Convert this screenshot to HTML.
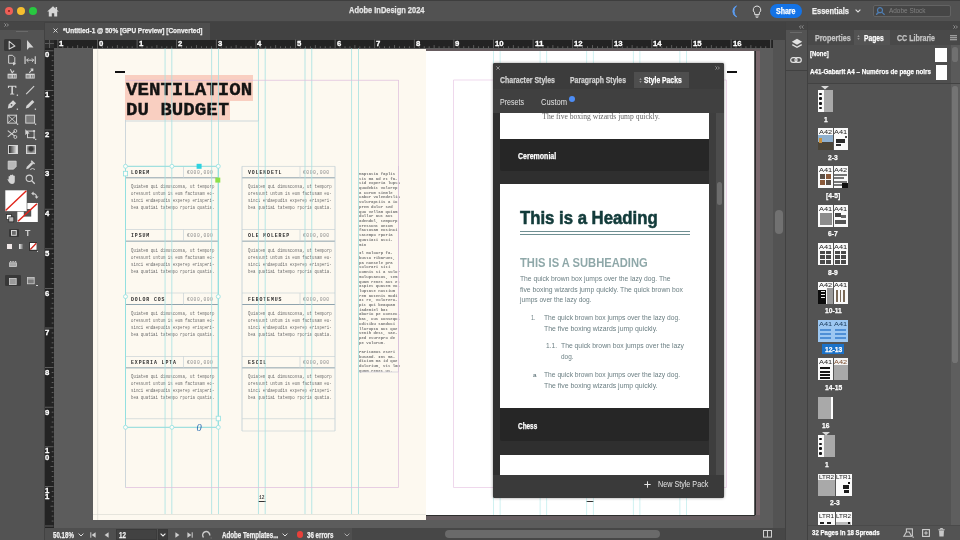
<!DOCTYPE html>
<html lang="en"><head><meta charset="utf-8"><title>Adobe InDesign 2024</title>
<style>
*{box-sizing:border-box;margin:0;padding:0}
html,body{width:960px;height:540px;overflow:hidden;background:#535353}
body{position:relative;font-family:"Liberation Sans",sans-serif}
div{position:absolute}
svg{position:absolute;overflow:visible}
#app{left:0;top:0;width:960px;height:540px;overflow:hidden;will-change:transform}
.t{white-space:pre}
.fs{font-family:"Liberation Sans",sans-serif}
.fm{font-family:"Liberation Mono",monospace}
.fr{font-family:"Liberation Serif",serif}
.b{font-weight:bold}
</style></head>
<body>
<div id="app">
<div style="left:0px;top:0px;width:960px;height:22px;background:#525252;"></div>
<div style="left:0px;top:0px;width:960px;height:0.8px;background:#3e3e3e;"></div>
<div style="left:0px;top:21px;width:960px;height:1px;background:#444444;"></div>
<div style="left:5px;top:6.7px;width:8px;height:8px;background:#ee5f57;border-radius:50%"></div>
<div style="left:17px;top:6.7px;width:8px;height:8px;background:#f6be2f;border-radius:50%"></div>
<div style="left:29px;top:6.7px;width:8px;height:8px;background:#28c840;border-radius:50%"></div>
<div style="left:7.8px;top:9.5px;width:2.4px;height:2.4px;background:#8c1d16;border-radius:50%"></div>
<svg style="left:47px;top:5.6px;" width="12" height="11" viewBox="0 0 12 11"><path d="M6 0.3 L0.2 5.6 H1.8 V10.6 H4.8 V7.2 H7.2 V10.6 H10.2 V5.6 H11.8 Z" fill="#d6d6d6"/><rect x="8.6" y="1" width="1.5" height="3" fill="#d6d6d6"/></svg>
<div class="t fs b" style="left:349px;top:4px;font-size:8.6px;line-height:12px;color:#e6e6e6;transform:scaleX(0.8680);transform-origin:0 50%;-webkit-text-stroke:0.25px #e6e6e6;">Adobe InDesign 2024</div>
<svg style="left:730px;top:5px;" width="9" height="13" viewBox="0 0 9 13"><path d="M6.5 0.8 A6 6 0 0 0 6.8 12 A7.5 7.5 0 0 1 6.5 0.8 Z" fill="#5b9cf0" stroke="#5b9cf0" stroke-width="0.8"/></svg>
<svg style="left:752px;top:5px;" width="10" height="13" viewBox="0 0 10 13"><path d="M5 1 A3.8 3.8 0 0 1 7.3 7.8 V9.6 H2.7 V7.8 A3.8 3.8 0 0 1 5 1 Z" fill="none" stroke="#e0e0e0" stroke-width="1"/><path d="M3.3 11 H6.7 M3.8 12.3 H6.2" stroke="#e0e0e0" stroke-width="0.9"/></svg>
<div style="left:770px;top:3.5px;width:31.5px;height:14.5px;background:#1473e6;border-radius:7.5px"></div>
<div class="t fs b" style="left:776px;top:5px;font-size:8.6px;line-height:12px;color:#ffffff;transform:scaleX(0.8158);transform-origin:0 50%;-webkit-text-stroke:0.25px #ffffff;">Share</div>
<div class="t fs b" style="left:812px;top:5px;font-size:8.8px;line-height:12px;color:#f0f0f0;transform:scaleX(0.8499);transform-origin:0 50%;-webkit-text-stroke:0.25px #f0f0f0;">Essentials</div>
<svg style="left:855px;top:9px;" width="6" height="4" viewBox="0 0 6 4"><path d="M0.6 0.6 L3 3 L5.4 0.6" fill="none" stroke="#e0e0e0" stroke-width="1.1"/></svg>
<div style="left:872.5px;top:5px;width:78px;height:11.5px;background:#464646;border:1px solid #636363;border-radius:2px"></div>
<svg style="left:875.5px;top:6.5px;" width="10" height="9" viewBox="0 0 10 9"><circle cx="4" cy="3.2" r="2.5" fill="none" stroke="#4f7fb5" stroke-width="1.2"/><path d="M0.6 8 Q0.8 5.6 3 5.6 M6 5.4 L8.6 7.8" fill="none" stroke="#4f7fb5" stroke-width="1.2"/></svg>
<div class="t fs" style="left:889px;top:5px;font-size:7.8px;line-height:11px;color:#808080;transform:scaleX(0.8252);transform-origin:0 50%;">Adobe Stock</div>
<div style="left:45px;top:22px;width:740px;height:518px;background:#5c5c5c;"></div>
<div style="left:45px;top:21.5px;width:740px;height:18px;background:#424242;"></div>
<div style="left:45px;top:23px;width:165px;height:16.5px;background:#4e4e4e;"></div>
<svg style="left:52.5px;top:28px;" width="5" height="5" viewBox="0 0 5 5"><path d="M0.5 0.5 L4.5 4.5 M4.5 0.5 L0.5 4.5" stroke="#e0e0e0" stroke-width="0.9"/></svg>
<div class="t fs b" style="left:63px;top:25px;font-size:8px;line-height:11px;color:#f0f0f0;transform:scaleX(0.8076);transform-origin:0 50%;-webkit-text-stroke:0.25px #f0f0f0;">*Untitled-1 @ 50% [GPU Preview] [Converted]</div>
<div style="left:45px;top:39.5px;width:728.5px;height:8.6px;background:#232323;"></div>
<div style="left:45px;top:39.5px;width:8.5px;height:488.5px;background:#232323;"></div>
<div style="left:45px;top:39.5px;width:8.5px;height:8.6px;background:#2c2c2c;"></div>
<div style="left:48.6px;top:39.5px;width:0.7px;height:8.6px;background:#5a5a5a;"></div>
<div style="left:45px;top:43.4px;width:8.5px;height:0.7px;background:#5a5a5a;"></div>
<svg style="left:0px;top:0px;" width="960" height="540" viewBox="0 0 960 540"><rect x="57.50" y="39.5" width="0.8" height="8.6" fill="#6c6c6c"/><rect x="62.45" y="46.300000000000004" width="0.8" height="1.8" fill="#6c6c6c"/><rect x="67.40" y="46.300000000000004" width="0.8" height="1.8" fill="#6c6c6c"/><rect x="72.35" y="46.300000000000004" width="0.8" height="1.8" fill="#6c6c6c"/><rect x="77.30" y="45.1" width="0.8" height="3" fill="#6c6c6c"/><rect x="82.25" y="46.300000000000004" width="0.8" height="1.8" fill="#6c6c6c"/><rect x="87.20" y="46.300000000000004" width="0.8" height="1.8" fill="#6c6c6c"/><rect x="92.15" y="46.300000000000004" width="0.8" height="1.8" fill="#6c6c6c"/><rect x="97.10" y="39.5" width="0.8" height="8.6" fill="#6c6c6c"/><rect x="102.05" y="46.300000000000004" width="0.8" height="1.8" fill="#6c6c6c"/><rect x="107.00" y="46.300000000000004" width="0.8" height="1.8" fill="#6c6c6c"/><rect x="111.95" y="46.300000000000004" width="0.8" height="1.8" fill="#6c6c6c"/><rect x="116.90" y="45.1" width="0.8" height="3" fill="#6c6c6c"/><rect x="121.85" y="46.300000000000004" width="0.8" height="1.8" fill="#6c6c6c"/><rect x="126.80" y="46.300000000000004" width="0.8" height="1.8" fill="#6c6c6c"/><rect x="131.75" y="46.300000000000004" width="0.8" height="1.8" fill="#6c6c6c"/><rect x="45.0" y="50.40" width="8.5" height="0.8" fill="#6c6c6c"/><rect x="51.7" y="55.35" width="1.8" height="0.8" fill="#6c6c6c"/><rect x="51.7" y="60.30" width="1.8" height="0.8" fill="#6c6c6c"/><rect x="51.7" y="65.25" width="1.8" height="0.8" fill="#6c6c6c"/><rect x="50.5" y="70.20" width="3" height="0.8" fill="#6c6c6c"/><rect x="51.7" y="75.15" width="1.8" height="0.8" fill="#6c6c6c"/><rect x="51.7" y="80.10" width="1.8" height="0.8" fill="#6c6c6c"/><rect x="51.7" y="85.05" width="1.8" height="0.8" fill="#6c6c6c"/><rect x="136.70" y="39.5" width="0.8" height="8.6" fill="#6c6c6c"/><rect x="141.65" y="46.300000000000004" width="0.8" height="1.8" fill="#6c6c6c"/><rect x="146.60" y="46.300000000000004" width="0.8" height="1.8" fill="#6c6c6c"/><rect x="151.55" y="46.300000000000004" width="0.8" height="1.8" fill="#6c6c6c"/><rect x="156.50" y="45.1" width="0.8" height="3" fill="#6c6c6c"/><rect x="161.45" y="46.300000000000004" width="0.8" height="1.8" fill="#6c6c6c"/><rect x="166.40" y="46.300000000000004" width="0.8" height="1.8" fill="#6c6c6c"/><rect x="171.35" y="46.300000000000004" width="0.8" height="1.8" fill="#6c6c6c"/><rect x="45.0" y="90.00" width="8.5" height="0.8" fill="#6c6c6c"/><rect x="51.7" y="94.95" width="1.8" height="0.8" fill="#6c6c6c"/><rect x="51.7" y="99.90" width="1.8" height="0.8" fill="#6c6c6c"/><rect x="51.7" y="104.85" width="1.8" height="0.8" fill="#6c6c6c"/><rect x="50.5" y="109.80" width="3" height="0.8" fill="#6c6c6c"/><rect x="51.7" y="114.75" width="1.8" height="0.8" fill="#6c6c6c"/><rect x="51.7" y="119.70" width="1.8" height="0.8" fill="#6c6c6c"/><rect x="51.7" y="124.65" width="1.8" height="0.8" fill="#6c6c6c"/><rect x="176.30" y="39.5" width="0.8" height="8.6" fill="#6c6c6c"/><rect x="181.25" y="46.300000000000004" width="0.8" height="1.8" fill="#6c6c6c"/><rect x="186.20" y="46.300000000000004" width="0.8" height="1.8" fill="#6c6c6c"/><rect x="191.15" y="46.300000000000004" width="0.8" height="1.8" fill="#6c6c6c"/><rect x="196.10" y="45.1" width="0.8" height="3" fill="#6c6c6c"/><rect x="201.05" y="46.300000000000004" width="0.8" height="1.8" fill="#6c6c6c"/><rect x="206.00" y="46.300000000000004" width="0.8" height="1.8" fill="#6c6c6c"/><rect x="210.95" y="46.300000000000004" width="0.8" height="1.8" fill="#6c6c6c"/><rect x="45.0" y="129.60" width="8.5" height="0.8" fill="#6c6c6c"/><rect x="51.7" y="134.55" width="1.8" height="0.8" fill="#6c6c6c"/><rect x="51.7" y="139.50" width="1.8" height="0.8" fill="#6c6c6c"/><rect x="51.7" y="144.45" width="1.8" height="0.8" fill="#6c6c6c"/><rect x="50.5" y="149.40" width="3" height="0.8" fill="#6c6c6c"/><rect x="51.7" y="154.35" width="1.8" height="0.8" fill="#6c6c6c"/><rect x="51.7" y="159.30" width="1.8" height="0.8" fill="#6c6c6c"/><rect x="51.7" y="164.25" width="1.8" height="0.8" fill="#6c6c6c"/><rect x="215.90" y="39.5" width="0.8" height="8.6" fill="#6c6c6c"/><rect x="220.85" y="46.300000000000004" width="0.8" height="1.8" fill="#6c6c6c"/><rect x="225.80" y="46.300000000000004" width="0.8" height="1.8" fill="#6c6c6c"/><rect x="230.75" y="46.300000000000004" width="0.8" height="1.8" fill="#6c6c6c"/><rect x="235.70" y="45.1" width="0.8" height="3" fill="#6c6c6c"/><rect x="240.65" y="46.300000000000004" width="0.8" height="1.8" fill="#6c6c6c"/><rect x="245.60" y="46.300000000000004" width="0.8" height="1.8" fill="#6c6c6c"/><rect x="250.55" y="46.300000000000004" width="0.8" height="1.8" fill="#6c6c6c"/><rect x="45.0" y="169.20" width="8.5" height="0.8" fill="#6c6c6c"/><rect x="51.7" y="174.15" width="1.8" height="0.8" fill="#6c6c6c"/><rect x="51.7" y="179.10" width="1.8" height="0.8" fill="#6c6c6c"/><rect x="51.7" y="184.05" width="1.8" height="0.8" fill="#6c6c6c"/><rect x="50.5" y="189.00" width="3" height="0.8" fill="#6c6c6c"/><rect x="51.7" y="193.95" width="1.8" height="0.8" fill="#6c6c6c"/><rect x="51.7" y="198.90" width="1.8" height="0.8" fill="#6c6c6c"/><rect x="51.7" y="203.85" width="1.8" height="0.8" fill="#6c6c6c"/><rect x="255.50" y="39.5" width="0.8" height="8.6" fill="#6c6c6c"/><rect x="260.45" y="46.300000000000004" width="0.8" height="1.8" fill="#6c6c6c"/><rect x="265.40" y="46.300000000000004" width="0.8" height="1.8" fill="#6c6c6c"/><rect x="270.35" y="46.300000000000004" width="0.8" height="1.8" fill="#6c6c6c"/><rect x="275.30" y="45.1" width="0.8" height="3" fill="#6c6c6c"/><rect x="280.25" y="46.300000000000004" width="0.8" height="1.8" fill="#6c6c6c"/><rect x="285.20" y="46.300000000000004" width="0.8" height="1.8" fill="#6c6c6c"/><rect x="290.15" y="46.300000000000004" width="0.8" height="1.8" fill="#6c6c6c"/><rect x="45.0" y="208.80" width="8.5" height="0.8" fill="#6c6c6c"/><rect x="51.7" y="213.75" width="1.8" height="0.8" fill="#6c6c6c"/><rect x="51.7" y="218.70" width="1.8" height="0.8" fill="#6c6c6c"/><rect x="51.7" y="223.65" width="1.8" height="0.8" fill="#6c6c6c"/><rect x="50.5" y="228.60" width="3" height="0.8" fill="#6c6c6c"/><rect x="51.7" y="233.55" width="1.8" height="0.8" fill="#6c6c6c"/><rect x="51.7" y="238.50" width="1.8" height="0.8" fill="#6c6c6c"/><rect x="51.7" y="243.45" width="1.8" height="0.8" fill="#6c6c6c"/><rect x="295.10" y="39.5" width="0.8" height="8.6" fill="#6c6c6c"/><rect x="300.05" y="46.300000000000004" width="0.8" height="1.8" fill="#6c6c6c"/><rect x="305.00" y="46.300000000000004" width="0.8" height="1.8" fill="#6c6c6c"/><rect x="309.95" y="46.300000000000004" width="0.8" height="1.8" fill="#6c6c6c"/><rect x="314.90" y="45.1" width="0.8" height="3" fill="#6c6c6c"/><rect x="319.85" y="46.300000000000004" width="0.8" height="1.8" fill="#6c6c6c"/><rect x="324.80" y="46.300000000000004" width="0.8" height="1.8" fill="#6c6c6c"/><rect x="329.75" y="46.300000000000004" width="0.8" height="1.8" fill="#6c6c6c"/><rect x="45.0" y="248.40" width="8.5" height="0.8" fill="#6c6c6c"/><rect x="51.7" y="253.35" width="1.8" height="0.8" fill="#6c6c6c"/><rect x="51.7" y="258.30" width="1.8" height="0.8" fill="#6c6c6c"/><rect x="51.7" y="263.25" width="1.8" height="0.8" fill="#6c6c6c"/><rect x="50.5" y="268.20" width="3" height="0.8" fill="#6c6c6c"/><rect x="51.7" y="273.15" width="1.8" height="0.8" fill="#6c6c6c"/><rect x="51.7" y="278.10" width="1.8" height="0.8" fill="#6c6c6c"/><rect x="51.7" y="283.05" width="1.8" height="0.8" fill="#6c6c6c"/><rect x="334.70" y="39.5" width="0.8" height="8.6" fill="#6c6c6c"/><rect x="339.65" y="46.300000000000004" width="0.8" height="1.8" fill="#6c6c6c"/><rect x="344.60" y="46.300000000000004" width="0.8" height="1.8" fill="#6c6c6c"/><rect x="349.55" y="46.300000000000004" width="0.8" height="1.8" fill="#6c6c6c"/><rect x="354.50" y="45.1" width="0.8" height="3" fill="#6c6c6c"/><rect x="359.45" y="46.300000000000004" width="0.8" height="1.8" fill="#6c6c6c"/><rect x="364.40" y="46.300000000000004" width="0.8" height="1.8" fill="#6c6c6c"/><rect x="369.35" y="46.300000000000004" width="0.8" height="1.8" fill="#6c6c6c"/><rect x="45.0" y="288.00" width="8.5" height="0.8" fill="#6c6c6c"/><rect x="51.7" y="292.95" width="1.8" height="0.8" fill="#6c6c6c"/><rect x="51.7" y="297.90" width="1.8" height="0.8" fill="#6c6c6c"/><rect x="51.7" y="302.85" width="1.8" height="0.8" fill="#6c6c6c"/><rect x="50.5" y="307.80" width="3" height="0.8" fill="#6c6c6c"/><rect x="51.7" y="312.75" width="1.8" height="0.8" fill="#6c6c6c"/><rect x="51.7" y="317.70" width="1.8" height="0.8" fill="#6c6c6c"/><rect x="51.7" y="322.65" width="1.8" height="0.8" fill="#6c6c6c"/><rect x="374.30" y="39.5" width="0.8" height="8.6" fill="#6c6c6c"/><rect x="379.25" y="46.300000000000004" width="0.8" height="1.8" fill="#6c6c6c"/><rect x="384.20" y="46.300000000000004" width="0.8" height="1.8" fill="#6c6c6c"/><rect x="389.15" y="46.300000000000004" width="0.8" height="1.8" fill="#6c6c6c"/><rect x="394.10" y="45.1" width="0.8" height="3" fill="#6c6c6c"/><rect x="399.05" y="46.300000000000004" width="0.8" height="1.8" fill="#6c6c6c"/><rect x="404.00" y="46.300000000000004" width="0.8" height="1.8" fill="#6c6c6c"/><rect x="408.95" y="46.300000000000004" width="0.8" height="1.8" fill="#6c6c6c"/><rect x="45.0" y="327.60" width="8.5" height="0.8" fill="#6c6c6c"/><rect x="51.7" y="332.55" width="1.8" height="0.8" fill="#6c6c6c"/><rect x="51.7" y="337.50" width="1.8" height="0.8" fill="#6c6c6c"/><rect x="51.7" y="342.45" width="1.8" height="0.8" fill="#6c6c6c"/><rect x="50.5" y="347.40" width="3" height="0.8" fill="#6c6c6c"/><rect x="51.7" y="352.35" width="1.8" height="0.8" fill="#6c6c6c"/><rect x="51.7" y="357.30" width="1.8" height="0.8" fill="#6c6c6c"/><rect x="51.7" y="362.25" width="1.8" height="0.8" fill="#6c6c6c"/><rect x="413.90" y="39.5" width="0.8" height="8.6" fill="#6c6c6c"/><rect x="418.85" y="46.300000000000004" width="0.8" height="1.8" fill="#6c6c6c"/><rect x="423.80" y="46.300000000000004" width="0.8" height="1.8" fill="#6c6c6c"/><rect x="428.75" y="46.300000000000004" width="0.8" height="1.8" fill="#6c6c6c"/><rect x="433.70" y="45.1" width="0.8" height="3" fill="#6c6c6c"/><rect x="438.65" y="46.300000000000004" width="0.8" height="1.8" fill="#6c6c6c"/><rect x="443.60" y="46.300000000000004" width="0.8" height="1.8" fill="#6c6c6c"/><rect x="448.55" y="46.300000000000004" width="0.8" height="1.8" fill="#6c6c6c"/><rect x="45.0" y="367.20" width="8.5" height="0.8" fill="#6c6c6c"/><rect x="51.7" y="372.15" width="1.8" height="0.8" fill="#6c6c6c"/><rect x="51.7" y="377.10" width="1.8" height="0.8" fill="#6c6c6c"/><rect x="51.7" y="382.05" width="1.8" height="0.8" fill="#6c6c6c"/><rect x="50.5" y="387.00" width="3" height="0.8" fill="#6c6c6c"/><rect x="51.7" y="391.95" width="1.8" height="0.8" fill="#6c6c6c"/><rect x="51.7" y="396.90" width="1.8" height="0.8" fill="#6c6c6c"/><rect x="51.7" y="401.85" width="1.8" height="0.8" fill="#6c6c6c"/><rect x="453.50" y="39.5" width="0.8" height="8.6" fill="#6c6c6c"/><rect x="458.45" y="46.300000000000004" width="0.8" height="1.8" fill="#6c6c6c"/><rect x="463.40" y="46.300000000000004" width="0.8" height="1.8" fill="#6c6c6c"/><rect x="468.35" y="46.300000000000004" width="0.8" height="1.8" fill="#6c6c6c"/><rect x="473.30" y="45.1" width="0.8" height="3" fill="#6c6c6c"/><rect x="478.25" y="46.300000000000004" width="0.8" height="1.8" fill="#6c6c6c"/><rect x="483.20" y="46.300000000000004" width="0.8" height="1.8" fill="#6c6c6c"/><rect x="488.15" y="46.300000000000004" width="0.8" height="1.8" fill="#6c6c6c"/><rect x="45.0" y="406.80" width="8.5" height="0.8" fill="#6c6c6c"/><rect x="51.7" y="411.75" width="1.8" height="0.8" fill="#6c6c6c"/><rect x="51.7" y="416.70" width="1.8" height="0.8" fill="#6c6c6c"/><rect x="51.7" y="421.65" width="1.8" height="0.8" fill="#6c6c6c"/><rect x="50.5" y="426.60" width="3" height="0.8" fill="#6c6c6c"/><rect x="51.7" y="431.55" width="1.8" height="0.8" fill="#6c6c6c"/><rect x="51.7" y="436.50" width="1.8" height="0.8" fill="#6c6c6c"/><rect x="51.7" y="441.45" width="1.8" height="0.8" fill="#6c6c6c"/><rect x="493.10" y="39.5" width="0.8" height="8.6" fill="#6c6c6c"/><rect x="498.05" y="46.300000000000004" width="0.8" height="1.8" fill="#6c6c6c"/><rect x="503.00" y="46.300000000000004" width="0.8" height="1.8" fill="#6c6c6c"/><rect x="507.95" y="46.300000000000004" width="0.8" height="1.8" fill="#6c6c6c"/><rect x="512.90" y="45.1" width="0.8" height="3" fill="#6c6c6c"/><rect x="517.85" y="46.300000000000004" width="0.8" height="1.8" fill="#6c6c6c"/><rect x="522.80" y="46.300000000000004" width="0.8" height="1.8" fill="#6c6c6c"/><rect x="527.75" y="46.300000000000004" width="0.8" height="1.8" fill="#6c6c6c"/><rect x="45.0" y="446.40" width="8.5" height="0.8" fill="#6c6c6c"/><rect x="51.7" y="451.35" width="1.8" height="0.8" fill="#6c6c6c"/><rect x="51.7" y="456.30" width="1.8" height="0.8" fill="#6c6c6c"/><rect x="51.7" y="461.25" width="1.8" height="0.8" fill="#6c6c6c"/><rect x="50.5" y="466.20" width="3" height="0.8" fill="#6c6c6c"/><rect x="51.7" y="471.15" width="1.8" height="0.8" fill="#6c6c6c"/><rect x="51.7" y="476.10" width="1.8" height="0.8" fill="#6c6c6c"/><rect x="51.7" y="481.05" width="1.8" height="0.8" fill="#6c6c6c"/><rect x="532.70" y="39.5" width="0.8" height="8.6" fill="#6c6c6c"/><rect x="537.65" y="46.300000000000004" width="0.8" height="1.8" fill="#6c6c6c"/><rect x="542.60" y="46.300000000000004" width="0.8" height="1.8" fill="#6c6c6c"/><rect x="547.55" y="46.300000000000004" width="0.8" height="1.8" fill="#6c6c6c"/><rect x="552.50" y="45.1" width="0.8" height="3" fill="#6c6c6c"/><rect x="557.45" y="46.300000000000004" width="0.8" height="1.8" fill="#6c6c6c"/><rect x="562.40" y="46.300000000000004" width="0.8" height="1.8" fill="#6c6c6c"/><rect x="567.35" y="46.300000000000004" width="0.8" height="1.8" fill="#6c6c6c"/><rect x="45.0" y="486.00" width="8.5" height="0.8" fill="#6c6c6c"/><rect x="51.7" y="490.95" width="1.8" height="0.8" fill="#6c6c6c"/><rect x="51.7" y="495.90" width="1.8" height="0.8" fill="#6c6c6c"/><rect x="51.7" y="500.85" width="1.8" height="0.8" fill="#6c6c6c"/><rect x="50.5" y="505.80" width="3" height="0.8" fill="#6c6c6c"/><rect x="51.7" y="510.75" width="1.8" height="0.8" fill="#6c6c6c"/><rect x="51.7" y="515.70" width="1.8" height="0.8" fill="#6c6c6c"/><rect x="51.7" y="520.65" width="1.8" height="0.8" fill="#6c6c6c"/><rect x="572.30" y="39.5" width="0.8" height="8.6" fill="#6c6c6c"/><rect x="577.25" y="46.300000000000004" width="0.8" height="1.8" fill="#6c6c6c"/><rect x="582.20" y="46.300000000000004" width="0.8" height="1.8" fill="#6c6c6c"/><rect x="587.15" y="46.300000000000004" width="0.8" height="1.8" fill="#6c6c6c"/><rect x="592.10" y="45.1" width="0.8" height="3" fill="#6c6c6c"/><rect x="597.05" y="46.300000000000004" width="0.8" height="1.8" fill="#6c6c6c"/><rect x="602.00" y="46.300000000000004" width="0.8" height="1.8" fill="#6c6c6c"/><rect x="606.95" y="46.300000000000004" width="0.8" height="1.8" fill="#6c6c6c"/><rect x="45.0" y="525.60" width="8.5" height="0.8" fill="#6c6c6c"/><rect x="611.90" y="39.5" width="0.8" height="8.6" fill="#6c6c6c"/><rect x="616.85" y="46.300000000000004" width="0.8" height="1.8" fill="#6c6c6c"/><rect x="621.80" y="46.300000000000004" width="0.8" height="1.8" fill="#6c6c6c"/><rect x="626.75" y="46.300000000000004" width="0.8" height="1.8" fill="#6c6c6c"/><rect x="631.70" y="45.1" width="0.8" height="3" fill="#6c6c6c"/><rect x="636.65" y="46.300000000000004" width="0.8" height="1.8" fill="#6c6c6c"/><rect x="641.60" y="46.300000000000004" width="0.8" height="1.8" fill="#6c6c6c"/><rect x="646.55" y="46.300000000000004" width="0.8" height="1.8" fill="#6c6c6c"/><rect x="651.50" y="39.5" width="0.8" height="8.6" fill="#6c6c6c"/><rect x="656.45" y="46.300000000000004" width="0.8" height="1.8" fill="#6c6c6c"/><rect x="661.40" y="46.300000000000004" width="0.8" height="1.8" fill="#6c6c6c"/><rect x="666.35" y="46.300000000000004" width="0.8" height="1.8" fill="#6c6c6c"/><rect x="671.30" y="45.1" width="0.8" height="3" fill="#6c6c6c"/><rect x="676.25" y="46.300000000000004" width="0.8" height="1.8" fill="#6c6c6c"/><rect x="681.20" y="46.300000000000004" width="0.8" height="1.8" fill="#6c6c6c"/><rect x="686.15" y="46.300000000000004" width="0.8" height="1.8" fill="#6c6c6c"/><rect x="691.10" y="39.5" width="0.8" height="8.6" fill="#6c6c6c"/><rect x="696.05" y="46.300000000000004" width="0.8" height="1.8" fill="#6c6c6c"/><rect x="701.00" y="46.300000000000004" width="0.8" height="1.8" fill="#6c6c6c"/><rect x="705.95" y="46.300000000000004" width="0.8" height="1.8" fill="#6c6c6c"/><rect x="710.90" y="45.1" width="0.8" height="3" fill="#6c6c6c"/><rect x="715.85" y="46.300000000000004" width="0.8" height="1.8" fill="#6c6c6c"/><rect x="720.80" y="46.300000000000004" width="0.8" height="1.8" fill="#6c6c6c"/><rect x="725.75" y="46.300000000000004" width="0.8" height="1.8" fill="#6c6c6c"/><rect x="730.70" y="39.5" width="0.8" height="8.6" fill="#6c6c6c"/><rect x="735.65" y="46.300000000000004" width="0.8" height="1.8" fill="#6c6c6c"/><rect x="740.60" y="46.300000000000004" width="0.8" height="1.8" fill="#6c6c6c"/><rect x="745.55" y="46.300000000000004" width="0.8" height="1.8" fill="#6c6c6c"/><rect x="750.50" y="45.1" width="0.8" height="3" fill="#6c6c6c"/><rect x="755.45" y="46.300000000000004" width="0.8" height="1.8" fill="#6c6c6c"/><rect x="760.40" y="46.300000000000004" width="0.8" height="1.8" fill="#6c6c6c"/><rect x="765.35" y="46.300000000000004" width="0.8" height="1.8" fill="#6c6c6c"/><rect x="770.30" y="39.5" width="0.8" height="8.6" fill="#6c6c6c"/></svg>
<div class="t fs b" style="left:59.3px;top:38px;font-size:8.0px;line-height:11px;color:#ffffff;transform:scaleX(0.9665);transform-origin:0 50%;-webkit-text-stroke:0.3px #ffffff;">1</div>
<div class="t fs b" style="left:98.9px;top:38px;font-size:8.0px;line-height:11px;color:#ffffff;transform:scaleX(0.9665);transform-origin:0 50%;-webkit-text-stroke:0.3px #ffffff;">0</div>
<div class="t fs b" style="left:138.5px;top:38px;font-size:8.0px;line-height:11px;color:#ffffff;transform:scaleX(0.9665);transform-origin:0 50%;-webkit-text-stroke:0.3px #ffffff;">1</div>
<div class="t fs b" style="left:178.1px;top:38px;font-size:8.0px;line-height:11px;color:#ffffff;transform:scaleX(0.9665);transform-origin:0 50%;-webkit-text-stroke:0.3px #ffffff;">2</div>
<div class="t fs b" style="left:217.70000000000002px;top:38px;font-size:8.0px;line-height:11px;color:#ffffff;transform:scaleX(0.9665);transform-origin:0 50%;-webkit-text-stroke:0.3px #ffffff;">3</div>
<div class="t fs b" style="left:257.3px;top:38px;font-size:8.0px;line-height:11px;color:#ffffff;transform:scaleX(0.9665);transform-origin:0 50%;-webkit-text-stroke:0.3px #ffffff;">4</div>
<div class="t fs b" style="left:296.9px;top:38px;font-size:8.0px;line-height:11px;color:#ffffff;transform:scaleX(0.9665);transform-origin:0 50%;-webkit-text-stroke:0.3px #ffffff;">5</div>
<div class="t fs b" style="left:336.5px;top:38px;font-size:8.0px;line-height:11px;color:#ffffff;transform:scaleX(0.9665);transform-origin:0 50%;-webkit-text-stroke:0.3px #ffffff;">6</div>
<div class="t fs b" style="left:376.09999999999997px;top:38px;font-size:8.0px;line-height:11px;color:#ffffff;transform:scaleX(0.9665);transform-origin:0 50%;-webkit-text-stroke:0.3px #ffffff;">7</div>
<div class="t fs b" style="left:415.7px;top:38px;font-size:8.0px;line-height:11px;color:#ffffff;transform:scaleX(0.9665);transform-origin:0 50%;-webkit-text-stroke:0.3px #ffffff;">8</div>
<div class="t fs b" style="left:455.3px;top:38px;font-size:8.0px;line-height:11px;color:#ffffff;transform:scaleX(0.9665);transform-origin:0 50%;-webkit-text-stroke:0.3px #ffffff;">9</div>
<div class="t fs b" style="left:494.9px;top:38px;font-size:8.0px;line-height:11px;color:#ffffff;transform:scaleX(0.9665);transform-origin:0 50%;-webkit-text-stroke:0.3px #ffffff;">10</div>
<div class="t fs b" style="left:534.5px;top:38px;font-size:8.0px;line-height:11px;color:#ffffff;transform:scaleX(1.0169);transform-origin:0 50%;-webkit-text-stroke:0.3px #ffffff;">11</div>
<div class="t fs b" style="left:574.1px;top:38px;font-size:8.0px;line-height:11px;color:#ffffff;transform:scaleX(0.9665);transform-origin:0 50%;-webkit-text-stroke:0.3px #ffffff;">12</div>
<div class="t fs b" style="left:613.7px;top:38px;font-size:8.0px;line-height:11px;color:#ffffff;transform:scaleX(0.9665);transform-origin:0 50%;-webkit-text-stroke:0.3px #ffffff;">13</div>
<div class="t fs b" style="left:653.3px;top:38px;font-size:8.0px;line-height:11px;color:#ffffff;transform:scaleX(0.9665);transform-origin:0 50%;-webkit-text-stroke:0.3px #ffffff;">14</div>
<div class="t fs b" style="left:692.9px;top:38px;font-size:8.0px;line-height:11px;color:#ffffff;transform:scaleX(0.9665);transform-origin:0 50%;-webkit-text-stroke:0.3px #ffffff;">15</div>
<div class="t fs b" style="left:732.5px;top:38px;font-size:8.0px;line-height:11px;color:#ffffff;transform:scaleX(0.9665);transform-origin:0 50%;-webkit-text-stroke:0.3px #ffffff;">16</div>
<div class="t fs b" style="left:45.4px;top:49px;font-size:8.0px;line-height:11px;color:#ffffff;transform:scaleX(0.9665);transform-origin:0 50%;-webkit-text-stroke:0.3px #ffffff;">0</div>
<div class="t fs b" style="left:45.4px;top:89px;font-size:8.0px;line-height:11px;color:#ffffff;transform:scaleX(0.9665);transform-origin:0 50%;-webkit-text-stroke:0.3px #ffffff;">1</div>
<div class="t fs b" style="left:45.4px;top:129px;font-size:8.0px;line-height:11px;color:#ffffff;transform:scaleX(0.9665);transform-origin:0 50%;-webkit-text-stroke:0.3px #ffffff;">2</div>
<div class="t fs b" style="left:45.4px;top:168px;font-size:8.0px;line-height:11px;color:#ffffff;transform:scaleX(0.9665);transform-origin:0 50%;-webkit-text-stroke:0.3px #ffffff;">3</div>
<div class="t fs b" style="left:45.4px;top:208px;font-size:8.0px;line-height:11px;color:#ffffff;transform:scaleX(0.9665);transform-origin:0 50%;-webkit-text-stroke:0.3px #ffffff;">4</div>
<div class="t fs b" style="left:45.4px;top:248px;font-size:8.0px;line-height:11px;color:#ffffff;transform:scaleX(0.9665);transform-origin:0 50%;-webkit-text-stroke:0.3px #ffffff;">5</div>
<div class="t fs b" style="left:45.4px;top:288px;font-size:8.0px;line-height:11px;color:#ffffff;transform:scaleX(0.9665);transform-origin:0 50%;-webkit-text-stroke:0.3px #ffffff;">6</div>
<div class="t fs b" style="left:45.4px;top:327px;font-size:8.0px;line-height:11px;color:#ffffff;transform:scaleX(0.9665);transform-origin:0 50%;-webkit-text-stroke:0.3px #ffffff;">7</div>
<div class="t fs b" style="left:45.4px;top:367px;font-size:8.0px;line-height:11px;color:#ffffff;transform:scaleX(0.9665);transform-origin:0 50%;-webkit-text-stroke:0.3px #ffffff;">8</div>
<div class="t fs b" style="left:45.4px;top:407px;font-size:8.0px;line-height:11px;color:#ffffff;transform:scaleX(0.9665);transform-origin:0 50%;-webkit-text-stroke:0.3px #ffffff;">9</div>
<div class="t fs b" style="left:45.4px;top:445px;font-size:8.0px;line-height:11px;color:#ffffff;transform:scaleX(0.9665);transform-origin:0 50%;-webkit-text-stroke:0.3px #ffffff;">1</div>
<div class="t fs b" style="left:45.4px;top:452px;font-size:8.0px;line-height:11px;color:#ffffff;transform:scaleX(0.9665);transform-origin:0 50%;-webkit-text-stroke:0.3px #ffffff;">0</div>
<div class="t fs b" style="left:45.4px;top:485px;font-size:8.0px;line-height:11px;color:#ffffff;transform:scaleX(0.9665);transform-origin:0 50%;-webkit-text-stroke:0.3px #ffffff;">1</div>
<div class="t fs b" style="left:45.4px;top:491px;font-size:8.0px;line-height:11px;color:#ffffff;transform:scaleX(0.9665);transform-origin:0 50%;-webkit-text-stroke:0.3px #ffffff;">1</div>
<div style="left:93px;top:48.5px;width:332.8px;height:471.5px;background:#fdf9f0;"></div>
<div style="left:425.8px;top:51px;width:328.7px;height:464px;background:#ffffff;"></div>
<div style="left:754.5px;top:51px;width:1px;height:464px;background:#2a2a2a;"></div>
<div style="left:755.5px;top:48.5px;width:4px;height:471.5px;background:#7a686d;"></div>
<div style="left:425.8px;top:515px;width:334px;height:5px;background:#675e61;"></div>
<div style="left:425.8px;top:515px;width:329.7px;height:0.9px;background:#2e2e2e;"></div>
<div style="left:425.8px;top:48.5px;width:334px;height:2.5px;background:#665b5e;"></div>
<div style="left:125px;top:75px;width:127.5px;height:26px;background:#f9cfc1;"></div>
<div style="left:125px;top:100.5px;width:104.5px;height:19.5px;background:#f9cfc1;"></div>
<div style="left:115px;top:71.3px;width:10px;height:1.5px;background:#111;"></div>
<div style="left:726.5px;top:71.3px;width:10px;height:1.5px;background:#111;"></div>
<div class="t fm b" style="left:125.6px;top:78px;font-size:18.2px;line-height:24px;color:#141414;transform:scaleX(1.0505);transform-origin:0 50%;-webkit-text-stroke:0.35px #141414;">VENTILATION</div>
<div class="t fm b" style="left:125.6px;top:98px;font-size:18.2px;line-height:24px;color:#141414;transform:scaleX(1.0499);transform-origin:0 50%;-webkit-text-stroke:0.35px #141414;">DU BUDGET</div>
<svg style="left:0px;top:0px;" width="960" height="540" viewBox="0 0 960 540"><rect x="125.5" y="120.65" width="133.0" height="0.7" fill="#b9c9d2" opacity="1"/><rect x="258.05" y="80" width="0.7" height="41" fill="#b9c9d2" opacity="1"/></svg>
<svg style="left:0px;top:0px;" width="960" height="540" viewBox="0 0 960 540"><rect x="125.5" y="165.95" width="92.80000000000001" height="0.7" fill="#c9d3d6" opacity="1"/><rect x="125.5" y="177.30" width="92.80000000000001" height="1.0" fill="#8fa3ad" opacity="1"/><rect x="183.15" y="166.3" width="0.7" height="11.5" fill="#c9d3d6" opacity="1"/><rect x="125.5" y="229.30" width="92.80000000000001" height="0.7" fill="#c9d3d6" opacity="1"/><rect x="125.5" y="240.65" width="92.80000000000001" height="1.0" fill="#8fa3ad" opacity="1"/><rect x="183.15" y="229.65" width="0.7" height="11.5" fill="#c9d3d6" opacity="1"/><rect x="125.5" y="292.65" width="92.80000000000001" height="0.7" fill="#c9d3d6" opacity="1"/><rect x="125.5" y="304.00" width="92.80000000000001" height="1.0" fill="#8fa3ad" opacity="1"/><rect x="183.15" y="293.0" width="0.7" height="11.5" fill="#c9d3d6" opacity="1"/><rect x="125.5" y="356.00" width="92.80000000000001" height="0.7" fill="#c9d3d6" opacity="1"/><rect x="125.5" y="367.35" width="92.80000000000001" height="1.0" fill="#8fa3ad" opacity="1"/><rect x="183.15" y="356.35" width="0.7" height="11.5" fill="#c9d3d6" opacity="1"/><rect x="125.10" y="166.3" width="0.8" height="261.0" fill="#bccdd4" opacity="1"/><rect x="217.90" y="166.3" width="0.8" height="261.0" fill="#bccdd4" opacity="1"/><rect x="125.5" y="418.45" width="92.80000000000001" height="0.7" fill="#c9d3d6" opacity="1"/><rect x="125.5" y="426.95" width="92.80000000000001" height="0.7" fill="#c9d3d6" opacity="1"/><rect x="242" y="165.95" width="93" height="0.7" fill="#c9d3d6" opacity="1"/><rect x="242" y="177.30" width="93" height="1.0" fill="#8fa3ad" opacity="1"/><rect x="299.65" y="166.3" width="0.7" height="11.5" fill="#c9d3d6" opacity="1"/><rect x="242" y="229.30" width="93" height="0.7" fill="#c9d3d6" opacity="1"/><rect x="242" y="240.65" width="93" height="1.0" fill="#8fa3ad" opacity="1"/><rect x="299.65" y="229.65" width="0.7" height="11.5" fill="#c9d3d6" opacity="1"/><rect x="242" y="292.65" width="93" height="0.7" fill="#c9d3d6" opacity="1"/><rect x="242" y="304.00" width="93" height="1.0" fill="#8fa3ad" opacity="1"/><rect x="299.65" y="293.0" width="0.7" height="11.5" fill="#c9d3d6" opacity="1"/><rect x="242" y="356.00" width="93" height="0.7" fill="#c9d3d6" opacity="1"/><rect x="242" y="367.35" width="93" height="1.0" fill="#8fa3ad" opacity="1"/><rect x="299.65" y="356.35" width="0.7" height="11.5" fill="#c9d3d6" opacity="1"/><rect x="241.60" y="166.3" width="0.8" height="264.7" fill="#bccdd4" opacity="1"/><rect x="334.60" y="166.3" width="0.8" height="264.7" fill="#bccdd4" opacity="1"/><rect x="242" y="418.45" width="93" height="0.7" fill="#c9d3d6" opacity="1"/><rect x="242" y="430.65" width="93" height="0.7" fill="#c9d3d6" opacity="1"/></svg>
<div class="t fm b" style="left:131.3px;top:170px;font-size:5.0px;line-height:7px;color:#2e2e2e;letter-spacing:0.9px;transform:scaleX(0.9800);transform-origin:0 50%;">LOREM</div>
<div class="t fm" style="left:186.7px;top:170px;font-size:5.0px;line-height:7px;color:#8d8d8d;letter-spacing:0.5px;transform:scaleX(0.9427);transform-origin:0 50%;">€000,000</div>
<div class="t fm" style="left:131.1px;top:184px;font-size:4.6px;line-height:6px;color:#6e6e6e;transform:scaleX(0.8907);transform-origin:0 50%;">Quiatem qui dimusconsa, ut temporp</div>
<div class="t fm" style="left:131.1px;top:191px;font-size:4.6px;line-height:6px;color:#6e6e6e;transform:scaleX(0.8907);transform-origin:0 50%;">oressunt untum is eum factusam eo-</div>
<div class="t fm" style="left:131.1px;top:198px;font-size:4.6px;line-height:6px;color:#6e6e6e;transform:scaleX(0.8907);transform-origin:0 50%;">sinci endaepudis experep erisperi-</div>
<div class="t fm" style="left:131.1px;top:205px;font-size:4.6px;line-height:6px;color:#6e6e6e;transform:scaleX(0.8907);transform-origin:0 50%;">bea quatiai tatempo rporia quatia.</div>
<div class="t fm b" style="left:131.3px;top:233px;font-size:5.0px;line-height:7px;color:#2e2e2e;letter-spacing:0.9px;transform:scaleX(0.9800);transform-origin:0 50%;">IPSUM</div>
<div class="t fm" style="left:186.7px;top:233px;font-size:5.0px;line-height:7px;color:#8d8d8d;letter-spacing:0.5px;transform:scaleX(0.9427);transform-origin:0 50%;">€000,000</div>
<div class="t fm" style="left:131.1px;top:248px;font-size:4.6px;line-height:6px;color:#6e6e6e;transform:scaleX(0.8907);transform-origin:0 50%;">Quiatem qui dimusconsa, ut temporp</div>
<div class="t fm" style="left:131.1px;top:255px;font-size:4.6px;line-height:6px;color:#6e6e6e;transform:scaleX(0.8907);transform-origin:0 50%;">oressunt untum is eum factusam eo-</div>
<div class="t fm" style="left:131.1px;top:262px;font-size:4.6px;line-height:6px;color:#6e6e6e;transform:scaleX(0.8907);transform-origin:0 50%;">sinci endaepudis experep erisperi-</div>
<div class="t fm" style="left:131.1px;top:269px;font-size:4.6px;line-height:6px;color:#6e6e6e;transform:scaleX(0.8907);transform-origin:0 50%;">bea quatiai tatempo rporia quatia.</div>
<div class="t fm b" style="left:131.3px;top:297px;font-size:5.0px;line-height:7px;color:#2e2e2e;letter-spacing:0.9px;transform:scaleX(0.9800);transform-origin:0 50%;">DOLOR COS</div>
<div class="t fm" style="left:186.7px;top:297px;font-size:5.0px;line-height:7px;color:#8d8d8d;letter-spacing:0.5px;transform:scaleX(0.9427);transform-origin:0 50%;">€000,000</div>
<div class="t fm" style="left:131.1px;top:311px;font-size:4.6px;line-height:6px;color:#6e6e6e;transform:scaleX(0.8907);transform-origin:0 50%;">Quiatem qui dimusconsa, ut temporp</div>
<div class="t fm" style="left:131.1px;top:318px;font-size:4.6px;line-height:6px;color:#6e6e6e;transform:scaleX(0.8907);transform-origin:0 50%;">oressunt untum is eum factusam eo-</div>
<div class="t fm" style="left:131.1px;top:325px;font-size:4.6px;line-height:6px;color:#6e6e6e;transform:scaleX(0.8907);transform-origin:0 50%;">sinci endaepudis experep erisperi-</div>
<div class="t fm" style="left:131.1px;top:332px;font-size:4.6px;line-height:6px;color:#6e6e6e;transform:scaleX(0.8907);transform-origin:0 50%;">bea quatiai tatempo rporia quatia.</div>
<div class="t fm b" style="left:131.3px;top:360px;font-size:5.0px;line-height:7px;color:#2e2e2e;letter-spacing:0.9px;transform:scaleX(0.9800);transform-origin:0 50%;">EXPERIA LPTA</div>
<div class="t fm" style="left:186.7px;top:360px;font-size:5.0px;line-height:7px;color:#8d8d8d;letter-spacing:0.5px;transform:scaleX(0.9427);transform-origin:0 50%;">€000,000</div>
<div class="t fm" style="left:131.1px;top:374px;font-size:4.6px;line-height:6px;color:#6e6e6e;transform:scaleX(0.8907);transform-origin:0 50%;">Quiatem qui dimusconsa, ut temporp</div>
<div class="t fm" style="left:131.1px;top:381px;font-size:4.6px;line-height:6px;color:#6e6e6e;transform:scaleX(0.8907);transform-origin:0 50%;">oressunt untum is eum factusam eo-</div>
<div class="t fm" style="left:131.1px;top:388px;font-size:4.6px;line-height:6px;color:#6e6e6e;transform:scaleX(0.8907);transform-origin:0 50%;">sinci endaepudis experep erisperi-</div>
<div class="t fm" style="left:131.1px;top:395px;font-size:4.6px;line-height:6px;color:#6e6e6e;transform:scaleX(0.8907);transform-origin:0 50%;">bea quatiai tatempo rporia quatia.</div>
<div class="t fm b" style="left:247.8px;top:170px;font-size:5.0px;line-height:7px;color:#2e2e2e;letter-spacing:0.9px;transform:scaleX(0.9800);transform-origin:0 50%;">VOLENDETL</div>
<div class="t fm" style="left:303.2px;top:170px;font-size:5.0px;line-height:7px;color:#8d8d8d;letter-spacing:0.5px;transform:scaleX(0.9499);transform-origin:0 50%;">€000,000</div>
<div class="t fm" style="left:247.6px;top:184px;font-size:4.6px;line-height:6px;color:#6e6e6e;transform:scaleX(0.8929);transform-origin:0 50%;">Quiatem qui dimusconsa, ut temporp</div>
<div class="t fm" style="left:247.6px;top:191px;font-size:4.6px;line-height:6px;color:#6e6e6e;transform:scaleX(0.8929);transform-origin:0 50%;">oressunt untum is eum factusam eo-</div>
<div class="t fm" style="left:247.6px;top:198px;font-size:4.6px;line-height:6px;color:#6e6e6e;transform:scaleX(0.8929);transform-origin:0 50%;">sinci endaepudis experep erisperi-</div>
<div class="t fm" style="left:247.6px;top:205px;font-size:4.6px;line-height:6px;color:#6e6e6e;transform:scaleX(0.8929);transform-origin:0 50%;">bea quatiai tatempo rporia quatia.</div>
<div class="t fm b" style="left:247.8px;top:233px;font-size:5.0px;line-height:7px;color:#2e2e2e;letter-spacing:0.9px;transform:scaleX(0.9800);transform-origin:0 50%;">OLE MOLEREP</div>
<div class="t fm" style="left:303.2px;top:233px;font-size:5.0px;line-height:7px;color:#8d8d8d;letter-spacing:0.5px;transform:scaleX(0.9499);transform-origin:0 50%;">€000,000</div>
<div class="t fm" style="left:247.6px;top:248px;font-size:4.6px;line-height:6px;color:#6e6e6e;transform:scaleX(0.8929);transform-origin:0 50%;">Quiatem qui dimusconsa, ut temporp</div>
<div class="t fm" style="left:247.6px;top:255px;font-size:4.6px;line-height:6px;color:#6e6e6e;transform:scaleX(0.8929);transform-origin:0 50%;">oressunt untum is eum factusam eo-</div>
<div class="t fm" style="left:247.6px;top:262px;font-size:4.6px;line-height:6px;color:#6e6e6e;transform:scaleX(0.8929);transform-origin:0 50%;">sinci endaepudis experep erisperi-</div>
<div class="t fm" style="left:247.6px;top:269px;font-size:4.6px;line-height:6px;color:#6e6e6e;transform:scaleX(0.8929);transform-origin:0 50%;">bea quatiai tatempo rporia quatia.</div>
<div class="t fm b" style="left:247.8px;top:297px;font-size:5.0px;line-height:7px;color:#2e2e2e;letter-spacing:0.9px;transform:scaleX(0.9800);transform-origin:0 50%;">FEBOTEMUS</div>
<div class="t fm" style="left:303.2px;top:297px;font-size:5.0px;line-height:7px;color:#8d8d8d;letter-spacing:0.5px;transform:scaleX(0.9499);transform-origin:0 50%;">€000,000</div>
<div class="t fm" style="left:247.6px;top:311px;font-size:4.6px;line-height:6px;color:#6e6e6e;transform:scaleX(0.8929);transform-origin:0 50%;">Quiatem qui dimusconsa, ut temporp</div>
<div class="t fm" style="left:247.6px;top:318px;font-size:4.6px;line-height:6px;color:#6e6e6e;transform:scaleX(0.8929);transform-origin:0 50%;">oressunt untum is eum factusam eo-</div>
<div class="t fm" style="left:247.6px;top:325px;font-size:4.6px;line-height:6px;color:#6e6e6e;transform:scaleX(0.8929);transform-origin:0 50%;">sinci endaepudis experep erisperi-</div>
<div class="t fm" style="left:247.6px;top:332px;font-size:4.6px;line-height:6px;color:#6e6e6e;transform:scaleX(0.8929);transform-origin:0 50%;">bea quatiai tatempo rporia quatia.</div>
<div class="t fm b" style="left:247.8px;top:360px;font-size:5.0px;line-height:7px;color:#2e2e2e;letter-spacing:0.9px;transform:scaleX(0.9800);transform-origin:0 50%;">ESCIL</div>
<div class="t fm" style="left:303.2px;top:360px;font-size:5.0px;line-height:7px;color:#8d8d8d;letter-spacing:0.5px;transform:scaleX(0.9499);transform-origin:0 50%;">€000,000</div>
<div class="t fm" style="left:247.6px;top:374px;font-size:4.6px;line-height:6px;color:#6e6e6e;transform:scaleX(0.8929);transform-origin:0 50%;">Quiatem qui dimusconsa, ut temporp</div>
<div class="t fm" style="left:247.6px;top:381px;font-size:4.6px;line-height:6px;color:#6e6e6e;transform:scaleX(0.8929);transform-origin:0 50%;">oressunt untum is eum factusam eo-</div>
<div class="t fm" style="left:247.6px;top:388px;font-size:4.6px;line-height:6px;color:#6e6e6e;transform:scaleX(0.8929);transform-origin:0 50%;">sinci endaepudis experep erisperi-</div>
<div class="t fm" style="left:247.6px;top:395px;font-size:4.6px;line-height:6px;color:#6e6e6e;transform:scaleX(0.8929);transform-origin:0 50%;">bea quatiai tatempo rporia quatia.</div>
<div class="t fm b" style="left:358.6px;top:171px;font-size:4.1px;line-height:6px;color:#767676;transform:scaleX(0.9800);transform-origin:0 50%;">Maptatia faplis</div>
<div class="t fm b" style="left:358.6px;top:176px;font-size:4.1px;line-height:6px;color:#767676;transform:scaleX(0.9800);transform-origin:0 50%;">tis ma ad et fa-</div>
<div class="t fm b" style="left:358.6px;top:180px;font-size:4.1px;line-height:6px;color:#767676;transform:scaleX(0.9800);transform-origin:0 50%;">tid experia lupta</div>
<div class="t fm b" style="left:358.6px;top:185px;font-size:4.1px;line-height:6px;color:#767676;transform:scaleX(0.9800);transform-origin:0 50%;">quodebit volorep</div>
<div class="t fm b" style="left:358.6px;top:190px;font-size:4.1px;line-height:6px;color:#767676;transform:scaleX(0.9800);transform-origin:0 50%;">a corum sinmle</div>
<div class="t fm b" style="left:358.6px;top:194px;font-size:4.1px;line-height:6px;color:#767676;transform:scaleX(0.9800);transform-origin:0 50%;">cabor volendetlia</div>
<div class="t fm b" style="left:358.6px;top:199px;font-size:4.1px;line-height:6px;color:#767676;transform:scaleX(0.9800);transform-origin:0 50%;">voluraptiis a io</div>
<div class="t fm b" style="left:358.6px;top:204px;font-size:4.1px;line-height:6px;color:#767676;transform:scaleX(0.9800);transform-origin:0 50%;">prem dolor sed</div>
<div class="t fm b" style="left:358.6px;top:209px;font-size:4.1px;line-height:6px;color:#767676;transform:scaleX(0.9800);transform-origin:0 50%;">quo vellam quiam</div>
<div class="t fm b" style="left:358.6px;top:213px;font-size:4.1px;line-height:6px;color:#767676;transform:scaleX(0.9800);transform-origin:0 50%;">dollor aut aut</div>
<div class="t fm b" style="left:358.6px;top:218px;font-size:4.1px;line-height:6px;color:#767676;transform:scaleX(0.9800);transform-origin:0 50%;">adendul, temporp</div>
<div class="t fm b" style="left:358.6px;top:223px;font-size:4.1px;line-height:6px;color:#767676;transform:scaleX(0.9800);transform-origin:0 50%;">oressunt untum</div>
<div class="t fm b" style="left:358.6px;top:227px;font-size:4.1px;line-height:6px;color:#767676;transform:scaleX(0.9800);transform-origin:0 50%;">factusam eosinci</div>
<div class="t fm b" style="left:358.6px;top:232px;font-size:4.1px;line-height:6px;color:#767676;transform:scaleX(0.9800);transform-origin:0 50%;">tatempo rporia</div>
<div class="t fm b" style="left:358.6px;top:237px;font-size:4.1px;line-height:6px;color:#767676;transform:scaleX(0.9800);transform-origin:0 50%;">quatiati atci-</div>
<div class="t fm b" style="left:358.6px;top:242px;font-size:4.1px;line-height:6px;color:#767676;transform:scaleX(0.9800);transform-origin:0 50%;">min</div>
<div class="t fm b" style="left:358.6px;top:250px;font-size:4.1px;line-height:6px;color:#767676;transform:scaleX(0.9800);transform-origin:0 50%;">Il moloorp fa-</div>
<div class="t fm b" style="left:358.6px;top:255px;font-size:4.1px;line-height:6px;color:#767676;transform:scaleX(0.9800);transform-origin:0 50%;">busto ribarunt,</div>
<div class="t fm b" style="left:358.6px;top:260px;font-size:4.1px;line-height:6px;color:#767676;transform:scaleX(0.9800);transform-origin:0 50%;">pa nonsele pra</div>
<div class="t fm b" style="left:358.6px;top:264px;font-size:4.1px;line-height:6px;color:#767676;transform:scaleX(0.9800);transform-origin:0 50%;">solorari siti</div>
<div class="t fm b" style="left:358.6px;top:269px;font-size:4.1px;line-height:6px;color:#767676;transform:scaleX(0.9800);transform-origin:0 50%;">comnis si a volor</div>
<div class="t fm b" style="left:358.6px;top:274px;font-size:4.1px;line-height:6px;color:#767676;transform:scaleX(0.9800);transform-origin:0 50%;">moluptaecus, tem</div>
<div class="t fm b" style="left:358.6px;top:279px;font-size:4.1px;line-height:6px;color:#767676;transform:scaleX(0.9800);transform-origin:0 50%;">quam renet aut et</div>
<div class="t fm b" style="left:358.6px;top:283px;font-size:4.1px;line-height:6px;color:#767676;transform:scaleX(0.9800);transform-origin:0 50%;">aspiet quatem vo-</div>
<div class="t fm b" style="left:358.6px;top:288px;font-size:4.1px;line-height:6px;color:#767676;transform:scaleX(0.9800);transform-origin:0 50%;">luptate nostium</div>
<div class="t fm b" style="left:358.6px;top:293px;font-size:4.1px;line-height:6px;color:#767676;transform:scaleX(0.9800);transform-origin:0 50%;">rem autenis modi</div>
<div class="t fm b" style="left:358.6px;top:297px;font-size:4.1px;line-height:6px;color:#767676;transform:scaleX(0.9800);transform-origin:0 50%;">at re, volorero-</div>
<div class="t fm b" style="left:358.6px;top:302px;font-size:4.1px;line-height:6px;color:#767676;transform:scaleX(0.9800);transform-origin:0 50%;">pit qui beaquam</div>
<div class="t fm b" style="left:358.6px;top:307px;font-size:4.1px;line-height:6px;color:#767676;transform:scaleX(0.9800);transform-origin:0 50%;">iademiel bat</div>
<div class="t fm b" style="left:358.6px;top:311px;font-size:4.1px;line-height:6px;color:#767676;transform:scaleX(0.9800);transform-origin:0 50%;">aborio pe consec-</div>
<div class="t fm b" style="left:358.6px;top:316px;font-size:4.1px;line-height:6px;color:#767676;transform:scaleX(0.9800);transform-origin:0 50%;">bat, cus consequi</div>
<div class="t fm b" style="left:358.6px;top:321px;font-size:4.1px;line-height:6px;color:#767676;transform:scaleX(0.9800);transform-origin:0 50%;">uditibu sanduci</div>
<div class="t fm b" style="left:358.6px;top:326px;font-size:4.1px;line-height:6px;color:#767676;transform:scaleX(0.9800);transform-origin:0 50%;">llorupta aut que</div>
<div class="t fm b" style="left:358.6px;top:330px;font-size:4.1px;line-height:6px;color:#767676;transform:scaleX(0.9800);transform-origin:0 50%;">venih dest, sae-</div>
<div class="t fm b" style="left:358.6px;top:335px;font-size:4.1px;line-height:6px;color:#767676;transform:scaleX(0.9800);transform-origin:0 50%;">ped eturepro de</div>
<div class="t fm b" style="left:358.6px;top:340px;font-size:4.1px;line-height:6px;color:#767676;transform:scaleX(0.9800);transform-origin:0 50%;">pe volorum.</div>
<div class="t fm b" style="left:358.6px;top:349px;font-size:4.1px;line-height:6px;color:#767676;transform:scaleX(0.9800);transform-origin:0 50%;">Faritamus eseri</div>
<div class="t fm b" style="left:358.6px;top:354px;font-size:4.1px;line-height:6px;color:#767676;transform:scaleX(0.9800);transform-origin:0 50%;">busand. Int ma-</div>
<div class="t fm b" style="left:358.6px;top:358px;font-size:4.1px;line-height:6px;color:#767676;transform:scaleX(0.9800);transform-origin:0 50%;">dicium ma id que</div>
<div class="t fm b" style="left:358.6px;top:363px;font-size:4.1px;line-height:6px;color:#767676;transform:scaleX(0.9800);transform-origin:0 50%;">dolorium, vit lam</div>
<div class="t fm b" style="left:358.6px;top:368px;font-size:4.1px;line-height:6px;color:#767676;transform:scaleX(0.9800);transform-origin:0 50%;">quam renet ut.</div>
<svg style="left:0px;top:0px;" width="960" height="540" viewBox="0 0 960 540"><rect x="398.10" y="166" width="0.8" height="206" fill="#cfc6da" opacity="1"/><rect x="358" y="371.65" width="40.5" height="0.7" fill="#c9c9d6" opacity="1"/></svg>
<div class="t fm b" style="left:259.2px;top:495px;font-size:5.2px;line-height:7px;color:#4a4a4a;transform:scaleX(0.8973);transform-origin:0 50%;">12</div>
<div style="left:258.2px;top:500.7px;width:7.4px;height:1px;background:#333;"></div>
<div style="left:586.4px;top:500.7px;width:7.4px;height:1px;background:#333;"></div>
<svg style="left:0px;top:0px;" width="960" height="540" viewBox="0 0 960 540"><rect x="97.50" y="48.5" width="0.6" height="471.5" fill="#d8d8d0" opacity="1"/><rect x="93" y="514.00" width="332.8" height="0.6" fill="#d8d8d0" opacity="1"/><rect x="164.65" y="48.5" width="0.8" height="465.5" fill="#a6e2e2" opacity="1"/><rect x="171.45" y="48.5" width="0.8" height="465.5" fill="#a6e2e2" opacity="1"/><rect x="211.30" y="48.5" width="0.8" height="465.5" fill="#a6e2e2" opacity="1"/><rect x="218.10" y="48.5" width="0.8" height="465.5" fill="#a6e2e2" opacity="1"/><rect x="257.95" y="48.5" width="0.8" height="465.5" fill="#a6e2e2" opacity="1"/><rect x="264.75" y="48.5" width="0.8" height="465.5" fill="#a6e2e2" opacity="1"/><rect x="304.60" y="48.5" width="0.8" height="465.5" fill="#a6e2e2" opacity="1"/><rect x="311.40" y="48.5" width="0.8" height="465.5" fill="#a6e2e2" opacity="1"/><rect x="351.25" y="48.5" width="0.8" height="465.5" fill="#a6e2e2" opacity="1"/><rect x="358.05" y="48.5" width="0.8" height="465.5" fill="#a6e2e2" opacity="1"/><rect x="125.5" y="79.85" width="273.0" height="0.7" fill="#ddbcdc" opacity="1"/><rect x="398.15" y="80" width="0.7" height="407.5" fill="#ddbcdc" opacity="1"/><rect x="125.5" y="487.15" width="273.0" height="0.7" fill="#ddbcdc" opacity="1"/><rect x="125.15" y="120" width="0.7" height="367.5" fill="#b9c9d2" opacity="1"/><rect x="493.10" y="51" width="0.8" height="464" fill="#c4eeee" opacity="1"/><rect x="499.70" y="51" width="0.8" height="464" fill="#c4eeee" opacity="1"/><rect x="539.70" y="51" width="0.8" height="464" fill="#c4eeee" opacity="1"/><rect x="546.30" y="51" width="0.8" height="464" fill="#c4eeee" opacity="1"/><rect x="586.30" y="51" width="0.8" height="464" fill="#c4eeee" opacity="1"/><rect x="592.90" y="51" width="0.8" height="464" fill="#c4eeee" opacity="1"/><rect x="632.90" y="51" width="0.8" height="464" fill="#c4eeee" opacity="1"/><rect x="639.50" y="51" width="0.8" height="464" fill="#c4eeee" opacity="1"/><rect x="679.50" y="51" width="0.8" height="464" fill="#c4eeee" opacity="1"/><rect x="686.10" y="51" width="0.8" height="464" fill="#c4eeee" opacity="1"/><rect x="453.5" y="79.65" width="273.0" height="0.7" fill="#e8c8e4" opacity="1"/><rect x="453.15" y="80" width="0.7" height="407.5" fill="#e8c8e4" opacity="1"/><rect x="453.5" y="487.15" width="273.0" height="0.7" fill="#e8c8e4" opacity="1"/><rect x="726.15" y="80" width="0.7" height="407.5" fill="#e8c8e4" opacity="1"/></svg>
<svg style="left:0px;top:0px;" width="960" height="540" viewBox="0 0 960 540"><rect x="125.5" y="165.80" width="92.80000000000001" height="1" fill="#93e0e0" opacity="1"/><rect x="125.5" y="426.80" width="92.80000000000001" height="1" fill="#93e0e0" opacity="1"/><rect x="125.00" y="166.3" width="1" height="261.0" fill="#93e0e0" opacity="1"/><rect x="217.70" y="166.3" width="1.2" height="261.0" fill="#93e0e0" opacity="1"/><circle cx="125.5" cy="166.3" r="2" fill="#fdfdf8" stroke="#93e0e0" stroke-width="0.8"/><circle cx="171.9" cy="166.3" r="2" fill="#fdfdf8" stroke="#93e0e0" stroke-width="0.8"/><circle cx="218.3" cy="166.3" r="2" fill="#fdfdf8" stroke="#93e0e0" stroke-width="0.8"/><circle cx="125.5" cy="296.6" r="2" fill="#fdfdf8" stroke="#93e0e0" stroke-width="0.8"/><circle cx="218.3" cy="296.6" r="2" fill="#fdfdf8" stroke="#93e0e0" stroke-width="0.8"/><circle cx="125.5" cy="427.3" r="2" fill="#fdfdf8" stroke="#93e0e0" stroke-width="0.8"/><circle cx="171.9" cy="427.3" r="2" fill="#fdfdf8" stroke="#93e0e0" stroke-width="0.8"/><circle cx="218.3" cy="427.3" r="2" fill="#fdfdf8" stroke="#93e0e0" stroke-width="0.8"/><rect x="123.4" y="171.3" width="4.2" height="4.6" fill="#fdfdf8" stroke="#93e0e0" stroke-width="0.8"/><rect x="216.2" y="416.2" width="4.2" height="4.6" fill="#fdfdf8" stroke="#93e0e0" stroke-width="0.8"/><rect x="196.6" y="163.8" width="5" height="5" fill="#2fd3e0"/><rect x="215.3" y="177.6" width="5" height="5" fill="#8ee04a"/></svg>
<div class="t fr" style="left:196.6px;top:421px;font-size:10.5px;line-height:14px;color:#2a6fb3;font-style:italic;">0</div>
<div style="left:773px;top:39.5px;width:11.5px;height:488.5px;background:#535353;"></div>
<div style="left:775px;top:209.5px;width:8px;height:24px;background:#717171;border-radius:4px"></div>
<div style="left:45px;top:527.5px;width:740px;height:12.5px;background:#4f4f4f;"></div>
<div style="left:352px;top:527.5px;width:433px;height:12.5px;background:#474747;"></div>
<div style="left:445px;top:529.8px;width:215px;height:8.5px;background:#6a6a6a;border-radius:4.5px"></div>
<div class="t fs b" style="left:53px;top:530px;font-size:8.4px;line-height:11px;color:#f0f0f0;transform:scaleX(0.7371);transform-origin:0 50%;-webkit-text-stroke:0.25px #f0f0f0;">50.18%</div>
<svg style="left:78px;top:532.5px;" width="6" height="4" viewBox="0 0 6 4"><path d="M0.6 0.6 L3 3 L5.4 0.6" fill="none" stroke="#ddd" stroke-width="1"/></svg>
<svg style="left:90px;top:531.5px;" width="6" height="6" viewBox="0 0 6 6"><rect x="0.3" y="0.3" width="1" height="5.4" fill="#ccc"/><path d="M5.6 0.3 L1.6 3 L5.6 5.7 Z" fill="#ccc"/></svg>
<svg style="left:103.5px;top:531.5px;" width="5" height="6" viewBox="0 0 5 6"><path d="M4.6 0.3 L0.6 3 L4.6 5.7 Z" fill="#ccc"/></svg>
<div style="left:115.5px;top:529px;width:41px;height:10.5px;background:#424242;border:0.5px solid #3a3a3a"></div>
<div class="t fs b" style="left:119px;top:530px;font-size:8.4px;line-height:11px;color:#f0f0f0;transform:scaleX(0.7492);transform-origin:0 50%;-webkit-text-stroke:0.25px #f0f0f0;">12</div>
<div style="left:158px;top:529px;width:10px;height:10.5px;background:#3c3c3c;border:0.5px solid #383838"></div>
<svg style="left:160px;top:532.7px;" width="6" height="4" viewBox="0 0 6 4"><path d="M0.6 0.6 L3 3 L5.4 0.6" fill="none" stroke="#eee" stroke-width="1.1"/></svg>
<svg style="left:174.5px;top:531.5px;" width="5" height="6" viewBox="0 0 5 6"><path d="M0.4 0.3 L4.4 3 L0.4 5.7 Z" fill="#ccc"/></svg>
<svg style="left:186.5px;top:531.5px;" width="6" height="6" viewBox="0 0 6 6"><rect x="4.7" y="0.3" width="1" height="5.4" fill="#ccc"/><path d="M0.4 0.3 L4.4 3 L0.4 5.7 Z" fill="#ccc"/></svg>
<svg style="left:201.5px;top:530px;" width="10" height="9" viewBox="0 0 10 9"><path d="M1.5 7.5 A3.6 3.6 0 1 1 7.8 5.5" fill="none" stroke="#c8c8c8" stroke-width="1.4"/><rect x="8.5" y="7.3" width="1.3" height="1.3" fill="#6c6c6c"/></svg>
<div class="t fs b" style="left:221.5px;top:530px;font-size:8.4px;line-height:11px;color:#f0f0f0;transform:scaleX(0.7396);transform-origin:0 50%;-webkit-text-stroke:0.25px #f0f0f0;">Adobe Templates...</div>
<svg style="left:282px;top:532.7px;" width="6" height="4" viewBox="0 0 6 4"><path d="M0.6 0.6 L3 3 L5.4 0.6" fill="none" stroke="#ddd" stroke-width="1"/></svg>
<div style="left:296.8px;top:531.4px;width:6.2px;height:6.2px;background:#e8403a;border-radius:50%"></div>
<div class="t fs b" style="left:306.8px;top:530px;font-size:8.4px;line-height:11px;color:#f0f0f0;transform:scaleX(0.7370);transform-origin:0 50%;-webkit-text-stroke:0.25px #f0f0f0;">36 errors</div>
<svg style="left:343.5px;top:532.7px;" width="6" height="4" viewBox="0 0 6 4"><path d="M0.6 0.6 L3 3 L5.4 0.6" fill="none" stroke="#aaa" stroke-width="1"/></svg>
<svg style="left:763px;top:530.2px;" width="9" height="8" viewBox="0 0 9 8"><rect x="0.5" y="0.5" width="8" height="6.6" fill="none" stroke="#d0d0d0" stroke-width="1"/><path d="M4.5 0.5 V7" stroke="#d0d0d0" stroke-width="1"/></svg>
<div style="left:493px;top:63px;width:231.29999999999995px;height:435px;background:#2f2f2f;border-radius:2px;box-shadow:0 0 3px rgba(0,0,0,0.45)"></div>
<div style="left:493px;top:63px;width:231.29999999999995px;height:49.5px;background:#3c3c3c;border-radius:2px 2px 0 0"></div>
<div style="left:493px;top:88.5px;width:231.29999999999995px;height:24px;background:#404040;"></div>
<svg style="left:495.7px;top:65.7px;" width="4" height="4" viewBox="0 0 4 4"><path d="M0.4 0.4 L3.6 3.6 M3.6 0.4 L0.4 3.6" stroke="#9a9a9a" stroke-width="0.9"/></svg>
<svg style="left:715px;top:65.5px;" width="5" height="4" viewBox="0 0 5 4"><path d="M0.4 0.4 L2 2 L0.4 3.6 M2.8 0.4 L4.4 2 L2.8 3.6" fill="none" stroke="#a0a0a0" stroke-width="0.8"/></svg>
<div style="left:634px;top:71.5px;width:55px;height:16.5px;background:#4e4e4e;"></div>
<div class="t fs b" style="left:500px;top:74px;font-size:8.6px;line-height:12px;color:#d2d2d2;transform:scaleX(0.8102);transform-origin:0 50%;-webkit-text-stroke:0.25px #d2d2d2;">Character Styles</div>
<div class="t fs b" style="left:570px;top:74px;font-size:8.6px;line-height:12px;color:#d2d2d2;transform:scaleX(0.7970);transform-origin:0 50%;-webkit-text-stroke:0.25px #d2d2d2;">Paragraph Styles</div>
<svg style="left:638.5px;top:77.5px;" width="3" height="5" viewBox="0 0 3 5"><path d="M1.5 0.3 L0.3 1.8 H2.7 Z M1.5 4.7 L0.3 3.2 H2.7 Z" fill="#b0b0b0"/></svg>
<div class="t fs b" style="left:644.3px;top:74px;font-size:8.6px;line-height:12px;color:#ffffff;transform:scaleX(0.7885);transform-origin:0 50%;-webkit-text-stroke:0.25px #ffffff;">Style Packs</div>
<div class="t fs" style="left:500px;top:96px;font-size:8.6px;line-height:12px;color:#e4e4e4;transform:scaleX(0.8232);transform-origin:0 50%;">Presets</div>
<div class="t fs" style="left:541px;top:96px;font-size:8.6px;line-height:12px;color:#e4e4e4;transform:scaleX(0.8775);transform-origin:0 50%;">Custom</div>
<div style="left:568.8px;top:96px;width:6px;height:6px;background:#4d8df5;border-radius:50%"></div>
<div style="left:709px;top:112.5px;width:15.3px;height:362.5px;background:#3e3e3e;"></div>
<div style="left:716.3px;top:112.5px;width:8px;height:362.5px;background:#4c4c4c;"></div>
<div style="left:717.3px;top:182px;width:5.2px;height:23px;background:#6c6c6c;border-radius:2.6px"></div>
<div style="left:499.5px;top:112.5px;width:209.5px;height:26px;background:#ffffff;"></div>
<div class="t fr" style="left:542.3px;top:112px;font-size:7.6px;line-height:10px;color:#666;">The five boxing wizards jump quickly.</div>
<div style="left:499.5px;top:138.5px;width:209.5px;height:32.3px;background:#262626;border-radius:0 0 2px 2px"></div>
<div class="t fs b" style="left:518px;top:151px;font-size:8.4px;line-height:11px;color:#ffffff;transform:scaleX(0.8372);transform-origin:0 50%;-webkit-text-stroke:0.25px #ffffff;">Ceremonial</div>
<div style="left:499.5px;top:184.2px;width:209.5px;height:224px;background:#ffffff;"></div>
<div class="t fs b" style="left:520px;top:206px;font-size:17.8px;line-height:24px;color:#123b3a;transform:scaleX(0.9413);transform-origin:0 50%;-webkit-text-stroke:0.55px #123b3a;">This is a Heading</div>
<div style="left:520px;top:230.6px;width:169.5px;height:1.1px;background:#6f8f92;"></div>
<div style="left:520px;top:233.5px;width:169.5px;height:1.1px;background:#6f8f92;"></div>
<div class="t fs b" style="left:520px;top:255px;font-size:12.2px;line-height:16px;color:#8fa8a9;transform:scaleX(0.9167);transform-origin:0 50%;">THIS IS A SUBHEADING</div>
<div class="t fs" style="left:520px;top:273px;font-size:8.0px;line-height:11px;color:#6a7e82;transform:scaleX(0.8426);transform-origin:0 50%;">The quick brown box jumps over the lazy dog. The</div>
<div class="t fs" style="left:520px;top:284px;font-size:8.0px;line-height:11px;color:#6a7e82;transform:scaleX(0.8518);transform-origin:0 50%;">five boxing wizards jump quickly. The quick brown box</div>
<div class="t fs" style="left:520px;top:294px;font-size:8.0px;line-height:11px;color:#6a7e82;transform:scaleX(0.8246);transform-origin:0 50%;">jumps over the lazy dog.</div>
<div class="t fs" style="left:531px;top:312px;font-size:8.0px;line-height:11px;color:#6a7e82;transform:scaleX(0.6745);transform-origin:0 50%;">1.</div>
<div class="t fs" style="left:544px;top:312px;font-size:8.0px;line-height:11px;color:#6a7e82;transform:scaleX(0.8356);transform-origin:0 50%;">The quick brown box jumps over the lazy dog.</div>
<div class="t fs" style="left:544px;top:323px;font-size:8.0px;line-height:11px;color:#6a7e82;transform:scaleX(0.8634);transform-origin:0 50%;">The five boxing wizards jump quickly.</div>
<div class="t fs" style="left:545.5px;top:340px;font-size:8.0px;line-height:11px;color:#6a7e82;transform:scaleX(0.8244);transform-origin:0 50%;">1.1.</div>
<div class="t fs" style="left:561px;top:340px;font-size:8.0px;line-height:11px;color:#6a7e82;transform:scaleX(0.8485);transform-origin:0 50%;">The quick brown box jumps over the lazy</div>
<div class="t fs" style="left:561px;top:351px;font-size:8.0px;line-height:11px;color:#6a7e82;transform:scaleX(0.8028);transform-origin:0 50%;">dog.</div>
<div class="t fs b" style="left:532.5px;top:371px;font-size:5.5px;line-height:8px;color:#6a7e82;transform:scaleX(1.1442);transform-origin:0 50%;">a</div>
<div class="t fs" style="left:544px;top:369px;font-size:8.0px;line-height:11px;color:#6a7e82;transform:scaleX(0.8356);transform-origin:0 50%;">The quick brown box jumps over the lazy dog.</div>
<div class="t fs" style="left:544px;top:380px;font-size:8.0px;line-height:11px;color:#6a7e82;transform:scaleX(0.8634);transform-origin:0 50%;">The five boxing wizards jump quickly.</div>
<div style="left:499.5px;top:408.2px;width:209.5px;height:32.6px;background:#262626;border-radius:0 0 2px 2px"></div>
<div class="t fs b" style="left:518px;top:421px;font-size:8.4px;line-height:11px;color:#ffffff;transform:scaleX(0.7655);transform-origin:0 50%;-webkit-text-stroke:0.25px #ffffff;">Chess</div>
<div style="left:499.5px;top:455px;width:209.5px;height:19.5px;background:#ffffff;"></div>
<div style="left:493px;top:475px;width:231.29999999999995px;height:23px;background:#3a3a3a;border-radius:0 0 2px 2px"></div>
<svg style="left:643.5px;top:480.5px;" width="7" height="7" viewBox="0 0 7 7"><path d="M3.5 0.3 V6.7 M0.3 3.5 H6.7" stroke="#e6e6e6" stroke-width="1"/></svg>
<div class="t fs" style="left:657.5px;top:479px;font-size:8.4px;line-height:11px;color:#e6e6e6;transform:scaleX(0.8585);transform-origin:0 50%;">New Style Pack</div>
<div style="left:784.5px;top:22px;width:175.5px;height:518px;background:#535353;"></div>
<div style="left:784.5px;top:21.5px;width:175.5px;height:8.5px;background:#444444;"></div>
<div style="left:784.5px;top:22px;width:1.2px;height:518px;background:#414141;"></div>
<div style="left:807px;top:22px;width:1.2px;height:518px;background:#414141;"></div>
<div style="left:785.7px;top:70.3px;width:21.3px;height:469.7px;background:#525252;"></div>
<div style="left:785.7px;top:69.8px;width:21.3px;height:0.8px;background:#414141;"></div>
<svg style="left:798.5px;top:24.5px;" width="5" height="4" viewBox="0 0 5 4"><path d="M2 0.4 L0.4 2 L2 3.6 M4.4 0.4 L2.8 2 L4.4 3.6" fill="none" stroke="#a0a0a0" stroke-width="0.8"/></svg>
<svg style="left:953px;top:24.5px;" width="5" height="4" viewBox="0 0 5 4"><path d="M0.4 0.4 L2 2 L0.4 3.6 M2.8 0.4 L4.4 2 L2.8 3.6" fill="none" stroke="#a0a0a0" stroke-width="0.8"/></svg>
<div style="left:790px;top:32.3px;width:12px;height:0.8px;background:#6a6a6a;"></div>
<svg style="left:790.5px;top:37.5px;" width="12" height="12" viewBox="0 0 12 12"><path d="M6 0.8 L11.2 3.8 L6 6.8 L0.8 3.8 Z" fill="#e2e2e2"/><path d="M1.3 6.6 L6 9.3 L10.7 6.6" fill="none" stroke="#e2e2e2" stroke-width="1.3"/></svg>
<svg style="left:790.3px;top:57px;" width="12" height="6" viewBox="0 0 12 6"><rect x="0.7" y="0.7" width="6.3" height="4.6" rx="2.3" fill="none" stroke="#e2e2e2" stroke-width="1.2"/><rect x="5" y="0.7" width="6.3" height="4.6" rx="2.3" fill="none" stroke="#e2e2e2" stroke-width="1.2"/></svg>
<div style="left:808.2px;top:30px;width:151.8px;height:15.3px;background:#494949;"></div>
<div style="left:853.5px;top:30px;width:36px;height:15.3px;background:#535353;"></div>
<div class="t fs b" style="left:815.3px;top:32px;font-size:8.5px;line-height:12px;color:#c4c4c4;transform:scaleX(0.8491);transform-origin:0 50%;-webkit-text-stroke:0.25px #c4c4c4;">Properties</div>
<svg style="left:857.2px;top:35.2px;" width="3" height="5" viewBox="0 0 3 5"><path d="M1.5 0.3 L0.3 1.8 H2.7 Z M1.5 4.7 L0.3 3.2 H2.7 Z" fill="#b0b0b0"/></svg>
<div class="t fs b" style="left:863.8px;top:32px;font-size:8.5px;line-height:12px;color:#ffffff;transform:scaleX(0.7866);transform-origin:0 50%;-webkit-text-stroke:0.25px #ffffff;">Pages</div>
<div class="t fs b" style="left:897px;top:32px;font-size:8.5px;line-height:12px;color:#c4c4c4;transform:scaleX(0.8294);transform-origin:0 50%;-webkit-text-stroke:0.25px #c4c4c4;">CC Librarie</div>
<svg style="left:949.5px;top:35px;" width="7" height="6" viewBox="0 0 7 6"><path d="M0 0.7 H7 M0 2.7 H7 M0 4.7 H7" stroke="#b8b8b8" stroke-width="1.1"/></svg>
<div style="left:808.2px;top:45.3px;width:151.8px;height:38px;background:#4f4f4f;"></div>
<div class="t fs b" style="left:810.3px;top:48px;font-size:7.8px;line-height:11px;color:#ffffff;transform:scaleX(0.7572);transform-origin:0 50%;-webkit-text-stroke:0.25px #ffffff;">[None]</div>
<div style="left:935px;top:48px;width:11.8px;height:14.3px;background:#ffffff;"></div>
<div class="t fs b" style="left:810.3px;top:66px;font-size:7.8px;line-height:11px;color:#ffffff;transform:scaleX(0.7991);transform-origin:0 50%;-webkit-text-stroke:0.25px #ffffff;">A41-Gabarit A4 – Numéros de page noirs</div>
<div style="left:936px;top:65.3px;width:11.2px;height:15px;background:#ffffff;"></div>
<div style="left:808.2px;top:83px;width:151.8px;height:1px;background:#424242;"></div>
<div style="left:951px;top:45.3px;width:9px;height:38px;background:#5a5a5a;"></div>
<div style="left:952.2px;top:46.5px;width:5.6px;height:15px;background:#707070;border-radius:2.8px"></div>
<div style="left:951px;top:84px;width:9px;height:441px;background:#5e5e5e;"></div>
<div style="left:952.3px;top:86px;width:5.6px;height:277px;background:#747474;border-radius:2.8px"></div>
<div style="left:818.0px;top:90px;width:15.2px;height:22px;background:#fafafa;"></div>
<div style="left:819.2px;top:92.5px;width:2.8px;height:2.6px;background:#151515;border-radius:1px"></div>
<div style="left:819.2px;top:97.3px;width:2.8px;height:2.6px;background:#151515;border-radius:1px"></div>
<div style="left:819.2px;top:102.1px;width:2.8px;height:2.6px;background:#151515;border-radius:1px"></div>
<div style="left:819.2px;top:106.9px;width:2.8px;height:2.6px;background:#151515;border-radius:1px"></div>
<div style="left:823.5px;top:90px;width:9.7px;height:22px;background:#a9a9a9;"></div>
<div class="t fs b" style="left:823.7346519375001px;top:114px;font-size:7.8px;line-height:11px;color:#ffffff;transform:scaleX(0.8600);transform-origin:0 50%;-webkit-text-stroke:0.25px #ffffff;">1</div>
<div style="left:818.0px;top:128px;width:15.2px;height:22px;background:#fafafa;"></div>
<div class="t fs" style="left:819.0px;top:127px;font-size:6.2px;line-height:9px;color:#222;transform:scaleX(1.1965);transform-origin:0 50%;">A42</div>
<div style="left:818.0px;top:134.5px;width:15.2px;height:9px;background:#8fb0cf;"></div>
<div style="left:818.0px;top:142px;width:15.2px;height:8px;background:#4a4438;"></div>
<div style="left:819.0px;top:138px;width:3px;height:5px;background:#c9903a;"></div>
<div style="left:833.2px;top:128px;width:15.2px;height:22px;background:#fafafa;"></div>
<div class="t fs" style="left:834.2px;top:127px;font-size:6.2px;line-height:9px;color:#222;transform:scaleX(1.1965);transform-origin:0 50%;">A41</div>
<div style="left:845.2px;top:135.5px;width:2px;height:2px;background:#111;border-radius:1px"></div>
<div style="left:836.2px;top:139px;width:9px;height:3.5px;background:#2a2a2a;"></div>
<div style="left:836.2px;top:144px;width:5px;height:2px;background:#333;"></div>
<div style="left:832.9000000000001px;top:128px;width:0.6px;height:22px;background:#555;"></div>
<div class="t fs b" style="left:828.35236946875px;top:152px;font-size:7.8px;line-height:11px;color:#ffffff;transform:scaleX(0.8600);transform-origin:0 50%;-webkit-text-stroke:0.25px #ffffff;">2-3</div>
<div style="left:818.0px;top:166.3px;width:15.2px;height:22px;background:#fafafa;"></div>
<div class="t fs" style="left:819.0px;top:165px;font-size:6.2px;line-height:9px;color:#222;transform:scaleX(1.1965);transform-origin:0 50%;">A41</div>
<div style="left:820.0px;top:174.3px;width:4.6px;height:4.4px;background:#5a5048;"></div>
<div style="left:826.0px;top:174.3px;width:4.6px;height:4.4px;background:#8a5a3a;"></div>
<div style="left:820.0px;top:180.3px;width:4.6px;height:4.4px;background:#8a5a3a;"></div>
<div style="left:826.0px;top:180.3px;width:4.6px;height:4.4px;background:#5a5048;"></div>
<div style="left:833.2px;top:166.3px;width:15.2px;height:22px;background:#fafafa;"></div>
<div class="t fs" style="left:834.2px;top:165px;font-size:6.2px;line-height:9px;color:#222;transform:scaleX(1.1965);transform-origin:0 50%;">A42</div>
<div style="left:834.2px;top:173.8px;width:13.2px;height:2px;background:#777;"></div>
<div style="left:834.2px;top:177.20000000000002px;width:10.2px;height:2px;background:#777;"></div>
<div style="left:834.2px;top:180.60000000000002px;width:13.2px;height:2px;background:#777;"></div>
<div style="left:834.2px;top:184.0px;width:10.2px;height:2px;background:#777;"></div>
<div style="left:842.2px;top:183.3px;width:6px;height:5px;background:#111;"></div>
<div style="left:832.9000000000001px;top:166.3px;width:0.6px;height:22px;background:#555;"></div>
<div class="t fs b" style="left:826.11850065625px;top:190px;font-size:7.8px;line-height:11px;color:#ffffff;transform:scaleX(0.8600);transform-origin:0 50%;-webkit-text-stroke:0.25px #ffffff;">[4-5]</div>
<div style="left:818.0px;top:204.8px;width:15.2px;height:22px;background:#fafafa;"></div>
<div class="t fs" style="left:819.0px;top:204px;font-size:6.2px;line-height:9px;color:#222;transform:scaleX(1.1965);transform-origin:0 50%;">A41</div>
<div style="left:819.5px;top:212.8px;width:12.2px;height:12px;background:#8c8c8c;"></div>
<div style="left:833.2px;top:204.8px;width:15.2px;height:22px;background:#fafafa;"></div>
<div class="t fs" style="left:834.2px;top:204px;font-size:6.2px;line-height:9px;color:#222;transform:scaleX(1.1965);transform-origin:0 50%;">A41</div>
<div style="left:835.2px;top:212.8px;width:6px;height:4px;background:#444;"></div>
<div style="left:841.2px;top:214.8px;width:5px;height:3px;background:#666;"></div>
<div style="left:835.2px;top:219.8px;width:11px;height:4.5px;background:#555;"></div>
<div style="left:832.9000000000001px;top:204.8px;width:0.6px;height:22px;background:#555;"></div>
<div class="t fs b" style="left:828.35236946875px;top:228px;font-size:7.8px;line-height:11px;color:#ffffff;transform:scaleX(0.8600);transform-origin:0 50%;-webkit-text-stroke:0.25px #ffffff;">6-7</div>
<div style="left:818.0px;top:243.2px;width:15.2px;height:22px;background:#fafafa;"></div>
<div class="t fs" style="left:819.0px;top:242px;font-size:6.2px;line-height:9px;color:#222;transform:scaleX(1.1965);transform-origin:0 50%;">A41</div>
<div style="left:820.0px;top:250.7px;width:4.6px;height:3.6px;background:#4a4a4a;"></div>
<div style="left:826.0px;top:250.7px;width:4.6px;height:3.6px;background:#4a4a4a;"></div>
<div style="left:820.0px;top:255.39999999999998px;width:4.6px;height:3.6px;background:#4a4a4a;"></div>
<div style="left:826.0px;top:255.39999999999998px;width:4.6px;height:3.6px;background:#4a4a4a;"></div>
<div style="left:820.0px;top:260.09999999999997px;width:4.6px;height:3.6px;background:#4a4a4a;"></div>
<div style="left:826.0px;top:260.09999999999997px;width:4.6px;height:3.6px;background:#4a4a4a;"></div>
<div style="left:833.2px;top:243.2px;width:15.2px;height:22px;background:#fafafa;"></div>
<div class="t fs" style="left:834.2px;top:242px;font-size:6.2px;line-height:9px;color:#222;transform:scaleX(1.1965);transform-origin:0 50%;">A41</div>
<div style="left:835.2px;top:250.7px;width:4.6px;height:3.6px;background:#4a4a4a;"></div>
<div style="left:841.2px;top:250.7px;width:4.6px;height:3.6px;background:#4a4a4a;"></div>
<div style="left:835.2px;top:255.39999999999998px;width:4.6px;height:3.6px;background:#4a4a4a;"></div>
<div style="left:841.2px;top:255.39999999999998px;width:4.6px;height:3.6px;background:#4a4a4a;"></div>
<div style="left:835.2px;top:260.09999999999997px;width:4.6px;height:3.6px;background:#4a4a4a;"></div>
<div style="left:841.2px;top:260.09999999999997px;width:4.6px;height:3.6px;background:#4a4a4a;"></div>
<div style="left:832.9000000000001px;top:243.2px;width:0.6px;height:22px;background:#555;"></div>
<div class="t fs b" style="left:828.35236946875px;top:267px;font-size:7.8px;line-height:11px;color:#ffffff;transform:scaleX(0.8600);transform-origin:0 50%;-webkit-text-stroke:0.25px #ffffff;">8-9</div>
<div style="left:818.0px;top:281.6px;width:15.2px;height:22px;background:#fafafa;"></div>
<div class="t fs" style="left:819.0px;top:280px;font-size:6.2px;line-height:9px;color:#222;transform:scaleX(1.1965);transform-origin:0 50%;">A42</div>
<div style="left:818.0px;top:289.6px;width:8px;height:14px;background:#0c0c0c;"></div>
<div style="left:826.5px;top:287.6px;width:6.5px;height:16px;background:#9a9a9a;"></div>
<div style="left:820.5px;top:290.6px;width:4px;height:1.4px;background:#eee;"></div>
<div style="left:820.5px;top:293.8px;width:4px;height:1.4px;background:#eee;"></div>
<div style="left:820.5px;top:297.0px;width:4px;height:1.4px;background:#eee;"></div>
<div style="left:833.2px;top:281.6px;width:15.2px;height:22px;background:#fafafa;"></div>
<div class="t fs" style="left:834.2px;top:280px;font-size:6.2px;line-height:9px;color:#222;transform:scaleX(1.1965);transform-origin:0 50%;">A41</div>
<div style="left:836.2px;top:289.6px;width:1.8px;height:12px;background:#7a6a58;"></div>
<div style="left:839.5px;top:289.6px;width:1.8px;height:12px;background:#7a6a58;"></div>
<div style="left:842.8000000000001px;top:289.6px;width:1.8px;height:12px;background:#7a6a58;"></div>
<div style="left:832.9000000000001px;top:281.6px;width:0.6px;height:22px;background:#555;"></div>
<div class="t fs b" style="left:824.8067198125001px;top:305px;font-size:7.8px;line-height:11px;color:#ffffff;transform:scaleX(0.8600);transform-origin:0 50%;-webkit-text-stroke:0.25px #ffffff;">10-11</div>
<div style="left:818.0px;top:320px;width:15.2px;height:22px;background:#9cc7f2;"></div>
<div class="t fs" style="left:819.0px;top:319px;font-size:6.2px;line-height:9px;color:#1a3a5a;transform:scaleX(1.1965);transform-origin:0 50%;">A41</div>
<div style="left:820.0px;top:328.5px;width:11.2px;height:2.2px;background:#4e8fd6;"></div>
<div style="left:820.0px;top:332.5px;width:11.2px;height:2.2px;background:#4e8fd6;"></div>
<div style="left:820.0px;top:336.5px;width:11.2px;height:2.2px;background:#4e8fd6;"></div>
<div style="left:833.2px;top:320px;width:15.2px;height:22px;background:#9cc7f2;"></div>
<div class="t fs" style="left:834.2px;top:319px;font-size:6.2px;line-height:9px;color:#1a3a5a;transform:scaleX(1.1965);transform-origin:0 50%;">A41</div>
<div style="left:835.2px;top:328.5px;width:11.2px;height:2.2px;background:#4e8fd6;"></div>
<div style="left:835.2px;top:332.5px;width:11.2px;height:2.2px;background:#4e8fd6;"></div>
<div style="left:835.2px;top:336.5px;width:11.2px;height:2.2px;background:#4e8fd6;"></div>
<div style="left:822.32167334375px;top:343.8px;width:21.7566533125px;height:10.4px;background:#1b72c9;"></div>
<div class="t fs b" style="left:824.62167334375px;top:344px;font-size:7.8px;line-height:11px;color:#ffffff;transform:scaleX(0.8600);transform-origin:0 50%;-webkit-text-stroke:0.25px #ffffff;">12-13</div>
<div style="left:818.0px;top:358.4px;width:15.2px;height:22px;background:#fafafa;"></div>
<div class="t fs" style="left:819.0px;top:357px;font-size:6.2px;line-height:9px;color:#222;transform:scaleX(1.1965);transform-origin:0 50%;">A41</div>
<div style="left:820.0px;top:367.4px;width:10px;height:2px;background:#151515;"></div>
<div style="left:820.0px;top:370.59999999999997px;width:10px;height:2px;background:#151515;"></div>
<div style="left:820.0px;top:373.79999999999995px;width:10px;height:2px;background:#151515;"></div>
<div style="left:820.0px;top:377.0px;width:10px;height:2px;background:#151515;"></div>
<div style="left:833.2px;top:358.4px;width:15.2px;height:22px;background:#a9a9a9;"></div>
<div style="left:833.2px;top:358.4px;width:15.2px;height:6.5px;background:#f4f4f4;"></div>
<div class="t fs" style="left:834.2px;top:357px;font-size:6.2px;line-height:9px;color:#7a4a2a;transform:scaleX(1.1965);transform-origin:0 50%;">A42</div>
<div style="left:832.9000000000001px;top:358.4px;width:0.6px;height:22px;background:#555;"></div>
<div class="t fs b" style="left:824.62167334375px;top:382px;font-size:7.8px;line-height:11px;color:#ffffff;transform:scaleX(0.8600);transform-origin:0 50%;-webkit-text-stroke:0.25px #ffffff;">14-15</div>
<div style="left:818.0px;top:396.8px;width:15.2px;height:22px;background:#a9a9a9;"></div>
<div style="left:830.5px;top:396.8px;width:2.7px;height:22px;background:#fff;"></div>
<div class="t fs b" style="left:821.869303875px;top:420px;font-size:7.8px;line-height:11px;color:#ffffff;transform:scaleX(0.8600);transform-origin:0 50%;-webkit-text-stroke:0.25px #ffffff;">16</div>
<div style="left:818px;top:435.3px;width:17px;height:22px;background:#fafafa;"></div>
<div style="left:819.2px;top:437.8px;width:2.8px;height:2.6px;background:#151515;border-radius:1px"></div>
<div style="left:819.2px;top:442.6px;width:2.8px;height:2.6px;background:#151515;border-radius:1px"></div>
<div style="left:819.2px;top:447.40000000000003px;width:2.8px;height:2.6px;background:#151515;border-radius:1px"></div>
<div style="left:819.2px;top:452.2px;width:2.8px;height:2.6px;background:#151515;border-radius:1px"></div>
<div style="left:823.5px;top:435.3px;width:11.5px;height:22px;background:#a9a9a9;"></div>
<div class="t fs b" style="left:824.6346519375px;top:459px;font-size:7.8px;line-height:11px;color:#ffffff;transform:scaleX(0.8600);transform-origin:0 50%;-webkit-text-stroke:0.25px #ffffff;">1</div>
<div style="left:818px;top:473.7px;width:17px;height:22px;background:#a9a9a9;"></div>
<div style="left:818px;top:473.7px;width:17px;height:6.5px;background:#f4f4f4;"></div>
<div class="t fs" style="left:819px;top:472px;font-size:6.2px;line-height:9px;color:#222;transform:scaleX(1.0203);transform-origin:0 50%;">LTR2</div>
<div style="left:835px;top:473.7px;width:17px;height:22px;background:#fafafa;"></div>
<div class="t fs" style="left:836px;top:472px;font-size:6.2px;line-height:9px;color:#222;transform:scaleX(1.0203);transform-origin:0 50%;">LTR1</div>
<div style="left:843px;top:484.7px;width:6px;height:4px;background:#1a1a1a;"></div>
<div style="left:844px;top:489.7px;width:5px;height:3px;background:#1a1a1a;"></div>
<div style="left:847.5px;top:481.7px;width:2px;height:2px;background:#111;"></div>
<div style="left:834.7px;top:473.7px;width:0.6px;height:22px;background:#555;"></div>
<div class="t fs b" style="left:830.15236946875px;top:497px;font-size:7.8px;line-height:11px;color:#ffffff;transform:scaleX(0.8600);transform-origin:0 50%;-webkit-text-stroke:0.25px #ffffff;">2-3</div>
<div style="left:818px;top:512px;width:17px;height:12.5px;background:#fafafa;"></div>
<div class="t fs" style="left:819px;top:511px;font-size:6.2px;line-height:9px;color:#222;transform:scaleX(1.0203);transform-origin:0 50%;">LTR1</div>
<div style="left:820px;top:521.5px;width:4px;height:2.4px;background:#222;"></div>
<div style="left:827px;top:521.5px;width:4px;height:2.4px;background:#222;"></div>
<div style="left:835px;top:512px;width:17px;height:12.5px;background:#fafafa;"></div>
<div class="t fs" style="left:836px;top:511px;font-size:6.2px;line-height:9px;color:#222;transform:scaleX(1.0203);transform-origin:0 50%;">LTR2</div>
<div style="left:836px;top:522px;width:15px;height:2.5px;background:#bbb;"></div>
<div style="left:847.5px;top:521.5px;width:2px;height:2px;background:#111;"></div>
<div style="left:834.7px;top:512px;width:0.6px;height:12.5px;background:#555;"></div>
<svg style="left:821px;top:86.3px;" width="8" height="3.4" viewBox="0 0 8 3.4"><path d="M0 0 H8 L4 3.4 Z" fill="#d8d8d8"/></svg>
<svg style="left:821.5px;top:431.6px;" width="8" height="3.4" viewBox="0 0 8 3.4"><path d="M0 0 H8 L4 3.4 Z" fill="#d8d8d8"/></svg>
<div style="left:808.2px;top:525px;width:151.8px;height:15px;background:#535353;"></div>
<div style="left:808.2px;top:524.6px;width:151.8px;height:0.8px;background:#4a4a4a;"></div>
<div class="t fs b" style="left:811.6px;top:527px;font-size:7.8px;line-height:11px;color:#ffffff;transform:scaleX(0.7796);transform-origin:0 50%;-webkit-text-stroke:0.25px #ffffff;">32 Pages in 18 Spreads</div>
<svg style="left:902.5px;top:527.5px;" width="11" height="10" viewBox="0 0 11 10"><rect x="3.4" y="0.9" width="6" height="7" fill="none" stroke="#c8c8c8" stroke-width="1.1"/><path d="M0.8 8.2 L3.4 4 H6.2 L8.6 8.2 Z" fill="#535353" stroke="#c8c8c8" stroke-width="1.1"/><rect x="9.6" y="8.6" width="1.2" height="1.2" fill="#c8c8c8"/></svg>
<svg style="left:921.5px;top:528.5px;" width="8" height="8" viewBox="0 0 8 8"><rect x="0.6" y="0.6" width="6.8" height="6.8" fill="none" stroke="#d0d0d0" stroke-width="1.1"/><path d="M4 2.2 V5.8 M2.2 4 H5.8" stroke="#d0d0d0" stroke-width="1"/></svg>
<svg style="left:938px;top:527.8px;" width="7" height="9" viewBox="0 0 7 9"><path d="M0.3 1.8 H6.7 M2.4 1.6 V0.5 H4.6 V1.6" fill="none" stroke="#c8c8c8" stroke-width="1"/><path d="M1 2.6 H6 L5.6 8.6 H1.4 Z" fill="#c8c8c8"/></svg>
<div style="left:0px;top:22px;width:45px;height:518px;background:#535353;"></div>
<div style="left:0px;top:21.5px;width:45px;height:8px;background:#464646;"></div>
<div style="left:44.3px;top:22px;width:0.9px;height:518px;background:#424242;"></div>
<svg style="left:3.8px;top:23.3px;" width="5" height="4" viewBox="0 0 5 4"><path d="M0.4 0.4 L2 2 L0.4 3.6 M2.8 0.4 L4.4 2 L2.8 3.6" fill="none" stroke="#a0a0a0" stroke-width="0.8"/></svg>
<div style="left:16px;top:31.2px;width:12px;height:0.8px;background:#6a6a6a;"></div>
<div style="left:4.2px;top:38.6px;width:16.8px;height:12.6px;background:#383838;border-radius:1.5px"></div>
<svg style="left:6.44px;top:39.14px;" width="12.32" height="12.32" viewBox="0 0 14 14"><path d="M3.6 2.6 L3.6 11.4 L10.2 8 Z" fill="none" stroke="#d4d4d4" stroke-width="1.2" stroke-linejoin="round"/></svg>
<svg style="left:24.44px;top:39.14px;" width="12.32" height="12.32" viewBox="0 0 14 14"><path d="M3.4 1.2 L3.4 12.4 L6 9.8 L10.8 9.6 Z" fill="#d4d4d4"/></svg>
<svg style="left:6.44px;top:53.54px;" width="12.32" height="12.32" viewBox="0 0 14 14"><path d="M3 1.5 H7.5 L10 4 V10.5 H3 Z" fill="none" stroke="#d4d4d4" stroke-width="1.1"/><path d="M8 9 L11.6 11.2 L8 13 Z" fill="#d4d4d4"/></svg>
<svg style="left:24.44px;top:53.54px;" width="12.32" height="12.32" viewBox="0 0 14 14"><path d="M1.2 2.5 V11.5 M12.8 2.5 V11.5" stroke="#d4d4d4" stroke-width="1.3"/><path d="M3 7 H11 M5 5 L3 7 L5 9 M9 5 L11 7 L9 9" fill="none" stroke="#d4d4d4" stroke-width="1.1"/></svg>
<svg style="left:6.44px;top:68.44px;" width="12.32" height="12.32" viewBox="0 0 14 14"><path d="M1.8 6.5 H12.2 V12 H1.8 Z" fill="#d4d4d4"/><path d="M3.6 8 V11 M5.6 8 V11 M8.4 8 V11 M10.4 8 V11" stroke="#535353" stroke-width="0.9"/><path d="M5 1.5 L7 5.5 L9.2 3" fill="none" stroke="#d4d4d4" stroke-width="1.2"/></svg>
<svg style="left:24.44px;top:68.44px;" width="12.32" height="12.32" viewBox="0 0 14 14"><path d="M1.8 6.5 H12.2 V12 H1.8 Z" fill="#d4d4d4"/><path d="M3.6 8 V11 M5.6 8 V11 M8.4 8 V11 M10.4 8 V11" stroke="#535353" stroke-width="0.9"/><path d="M6 5.5 L9.5 1.5 M7.5 1.2 H10 V3.6" fill="none" stroke="#d4d4d4" stroke-width="1.2"/></svg>
<svg style="left:6.44px;top:83.64px;" width="12.32" height="12.32" viewBox="0 0 14 14"><path d="M2.2 2 H11.8 V4.6 H10.8 L10.4 3.2 H7.9 V10.8 L9.4 11.2 V12 H4.6 V11.2 L6.1 10.8 V3.2 H3.6 L3.2 4.6 H2.2 Z" fill="#d4d4d4"/><rect x="12.2" y="12" width="1.5" height="1.5" fill="#d4d4d4"/></svg>
<svg style="left:24.44px;top:83.64px;" width="12.32" height="12.32" viewBox="0 0 14 14"><path d="M2.5 11.5 L11.5 2.5" stroke="#d4d4d4" stroke-width="1.3"/></svg>
<svg style="left:6.44px;top:98.24px;" width="12.32" height="12.32" viewBox="0 0 14 14"><path d="M2 12 L3 7.5 L8 2.5 L11.5 6 L6.5 11 Z" fill="#d4d4d4"/><circle cx="6.3" cy="7.7" r="1" fill="#535353"/><rect x="12.2" y="12" width="1.5" height="1.5" fill="#d4d4d4"/></svg>
<svg style="left:24.44px;top:98.24px;" width="12.32" height="12.32" viewBox="0 0 14 14"><path d="M2 12 L2.8 8.8 L9.4 2.2 L11.8 4.6 L5.2 11.2 Z" fill="#d4d4d4"/><rect x="12.2" y="12" width="1.5" height="1.5" fill="#d4d4d4"/></svg>
<svg style="left:6.44px;top:113.04px;" width="12.32" height="12.32" viewBox="0 0 14 14"><rect x="2" y="2.5" width="10" height="9" fill="none" stroke="#d4d4d4" stroke-width="1.1"/><path d="M2 2.5 L12 11.5 M12 2.5 L2 11.5" stroke="#d4d4d4" stroke-width="0.9"/><rect x="12.4" y="12" width="1.5" height="1.5" fill="#d4d4d4"/></svg>
<svg style="left:24.44px;top:113.04px;" width="12.32" height="12.32" viewBox="0 0 14 14"><rect x="2" y="2.5" width="10" height="9" fill="#7a7a7a" stroke="#d4d4d4" stroke-width="1.1"/><rect x="12.4" y="12" width="1.5" height="1.5" fill="#d4d4d4"/></svg>
<svg style="left:6.44px;top:128.24px;" width="12.32" height="12.32" viewBox="0 0 14 14"><path d="M2 3 L10 9.2 M2 10 L10 3.8" stroke="#d4d4d4" stroke-width="1.2"/><circle cx="10.6" cy="3.4" r="1.7" fill="none" stroke="#d4d4d4" stroke-width="1"/><circle cx="10.6" cy="10.2" r="1.7" fill="none" stroke="#d4d4d4" stroke-width="1"/></svg>
<svg style="left:24.44px;top:128.24px;" width="12.32" height="12.32" viewBox="0 0 14 14"><rect x="4" y="3.5" width="7.5" height="7.5" fill="none" stroke="#d4d4d4" stroke-width="1.1"/><path d="M1.5 1.5 L1.5 8 L3.4 6.4 L6.5 6.2 Z" fill="#d4d4d4"/><rect x="10.4" y="2.4" width="2.2" height="2.2" fill="#d4d4d4"/><rect x="10.4" y="9.9" width="2.2" height="2.2" fill="#d4d4d4"/><rect x="12.6" y="12.3" width="1.4" height="1.4" fill="#d4d4d4"/></svg>
<div style="left:7.6px;top:144.8px;width:10px;height:9.2px;background:linear-gradient(90deg,#2e2e2e,#e8e8e8);border:1px solid #d4d4d4"></div>
<div style="left:25.6px;top:144.8px;width:10px;height:9.2px;background:radial-gradient(circle at 50% 40%,#3a3a3a 30%,#9a9a9a 70%);border:1px solid #d4d4d4"></div>
<svg style="left:6.44px;top:159.04px;" width="12.32" height="12.32" viewBox="0 0 14 14"><path d="M2.4 2.4 H11.6 V8.6 L8.6 11.6 H2.4 Z" fill="#b9b9b9" stroke="#d4d4d4" stroke-width="0.8"/></svg>
<svg style="left:24.44px;top:159.04px;" width="12.32" height="12.32" viewBox="0 0 14 14"><path d="M2.4 11.6 L3.2 8.8 L8.6 3.4 L10.6 5.4 L5.2 10.8 Z" fill="#d4d4d4"/><path d="M8.2 2 L12 5.8" stroke="#d4d4d4" stroke-width="1.6"/><path d="M7 12 Q9.5 9.5 12.5 12" fill="none" stroke="#d4d4d4" stroke-width="1"/></svg>
<svg style="left:6.44px;top:173.44px;" width="12.32" height="12.32" viewBox="0 0 14 14"><path d="M3 7.6 V4 Q3.8 3 4.6 4 V2.6 Q5.5 1.6 6.4 2.6 V2.2 Q7.3 1.3 8.2 2.3 V3.2 Q9.2 2.4 10 3.4 V9 Q10 12.4 6.8 12.4 Q4.6 12.4 3.4 10.4 L1.6 7.4 Q2.2 6.4 3 7.6 Z" fill="#d4d4d4"/></svg>
<svg style="left:24.44px;top:173.44px;" width="12.32" height="12.32" viewBox="0 0 14 14"><circle cx="6" cy="6" r="3.6" fill="none" stroke="#d4d4d4" stroke-width="1.2"/><path d="M8.7 8.7 L12.2 12.2" stroke="#d4d4d4" stroke-width="1.5"/></svg>
<svg style="left:0px;top:186px;" width="45" height="40" viewBox="0 186 45 40"><rect x="17.3" y="203" width="20.5" height="19" fill="#ffffff"/><rect x="23.8" y="209" width="7.4" height="7.6" fill="#535353"/><path d="M18 221.3 L37 203.8" stroke="#e0241a" stroke-width="1.5"/><rect x="5" y="190" width="22" height="21.3" fill="#ffffff" stroke="#535353" stroke-width="0.6"/><path d="M5.6 210.6 L26.4 190.7" stroke="#e0241a" stroke-width="1.4"/><path d="M32.6 193.6 Q36.4 193.4 36.6 197.2" fill="none" stroke="#d0d0d0" stroke-width="1.1"/><path d="M31.2 193.6 L33.6 191.6 V195.6 Z M36.6 198.8 L34.6 196.4 H38.6 Z" fill="#d0d0d0"/><rect x="6.4" y="214.6" width="5" height="5" fill="#fff" stroke="#222" stroke-width="0.7"/><rect x="8.8" y="216.9" width="5" height="5" fill="#bbb" stroke="#222" stroke-width="0.7"/></svg>
<div style="left:9.2px;top:228.6px;width:9.8px;height:8.6px;background:#383838;border-radius:1px"></div>
<svg style="left:11.3px;top:230.1px;" width="6" height="6" viewBox="0 0 6 6"><rect x="0.5" y="0.5" width="4.8" height="4.8" fill="#6a6a6a" stroke="#d8d8d8" stroke-width="1"/></svg>
<div class="t fs b" style="left:25.4px;top:226px;font-size:9.4px;line-height:13px;color:#cfcfcf;transform:scaleX(0.9405);transform-origin:0 50%;">T</div>
<div style="left:5.9px;top:243.4px;width:6.8px;height:7px;background:#f0e8e8;border:0.6px solid #555"></div>
<div style="left:17.8px;top:243.4px;width:6.8px;height:7px;background:linear-gradient(90deg,#f4f4f4,#444);border:0.6px solid #555"></div>
<div style="left:28.6px;top:242px;width:8.6px;height:9.4px;background:#333;"></div>
<svg style="left:29.6px;top:243.4px;" width="6.6" height="6.8" viewBox="0 0 6.6 6.8"><rect x="0" y="0" width="6.6" height="6.8" fill="#fff"/><path d="M0.3 6.5 L6.3 0.3" stroke="#d0241a" stroke-width="1.3"/></svg>
<div style="left:36.8px;top:250.6px;width:1.3px;height:1.3px;background:#d0d0d0;"></div>
<svg style="left:9.2px;top:259.6px;" width="8" height="7" viewBox="0 0 8 7"><path d="M1 1.6 H2.4 M3.4 1.6 H4.8 M5.8 1.6 H7.2" stroke="#cfcfcf" stroke-width="1"/><rect x="0.6" y="2.8" width="7" height="3.8" fill="#a8a8a8" stroke="#d8d8d8" stroke-width="0.7"/></svg>
<div style="left:5.2px;top:274.5px;width:15.5px;height:11.6px;background:#383838;border-radius:1px"></div>
<svg style="left:9.2px;top:277.6px;" width="8" height="7" viewBox="0 0 8 7"><rect x="0.4" y="0.4" width="6.8" height="6.2" fill="#9a9a9a" stroke="#cfcfcf" stroke-width="0.8"/></svg>
<svg style="left:27.4px;top:277.4px;" width="8" height="7.4" viewBox="0 0 8 7.4"><rect x="0.4" y="0.4" width="6.8" height="6.4" fill="#7a7a7a" stroke="#cfcfcf" stroke-width="0.8"/><path d="M0.4 1.9 H7.2" stroke="#cfcfcf" stroke-width="0.8"/></svg>
<div style="left:36.4px;top:284.6px;width:1.4px;height:1.4px;background:#d0d0d0;"></div>
</div>
</body></html>
